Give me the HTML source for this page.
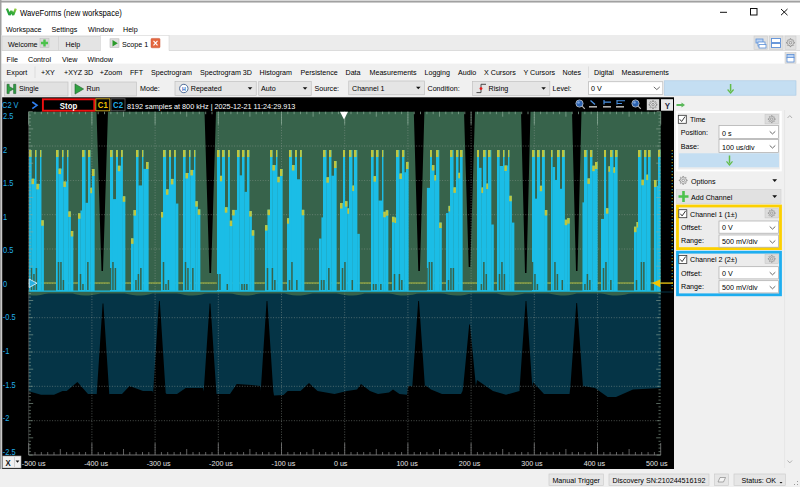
<!DOCTYPE html>
<html><head><meta charset="utf-8"><style>
html,body{margin:0;padding:0;background:#f0f0f0;overflow:hidden}
svg{display:block}
text{font-family:"Liberation Sans", sans-serif}
</style></head><body>
<svg width="800" height="487" viewBox="0 0 800 487">
<rect x="0" y="0" width="800" height="487" fill="#f0f0f0" />
<rect x="0" y="0" width="800" height="35" fill="#ffffff" />
<rect x="0" y="1.2" width="800" height="1.2" fill="#7a7a7a" />
<rect x="0" y="0" width="800" height="1.2" fill="#d8d8d8" />
<rect x="0" y="0" width="1.5" height="487" fill="#a0a0a0" />
<defs><linearGradient id="wg" x1="0" y1="1" x2="1" y2="0"><stop offset="0" stop-color="#129a3c"/><stop offset="0.55" stop-color="#3fae3a"/><stop offset="1" stop-color="#9ccf3c"/></linearGradient></defs>
<path d="M6.9 8.6 L9.5 14.9 L11.3 11 L13.2 14.9 L15.8 8.6" fill="none" stroke="url(#wg)" stroke-width="2.3" stroke-linejoin="bevel"/>
<text transform="translate(20.00,15.70) scale(0.915,1)" font-size="8.46" fill="#000" font-weight="normal" text-anchor="start" >WaveForms (new workspace)</text>
<path d="M720 12.3 H727" stroke="#111" stroke-width="1"/>
<rect x="750.5" y="8.5" width="6.5" height="6.5" fill="none" stroke="#111" stroke-width="1"/>
<path d="M781 9 L787.5 15.2 M787.5 9 L781 15.2" stroke="#111" stroke-width="1"/>
<text transform="translate(6.00,31.80) scale(0.915,1)" font-size="7.81" fill="#000" font-weight="normal" text-anchor="start" >Workspace</text>
<text transform="translate(51.60,31.80) scale(0.915,1)" font-size="7.81" fill="#000" font-weight="normal" text-anchor="start" >Settings</text>
<text transform="translate(88.00,31.80) scale(0.915,1)" font-size="7.81" fill="#000" font-weight="normal" text-anchor="start" >Window</text>
<text transform="translate(123.00,31.80) scale(0.915,1)" font-size="7.81" fill="#000" font-weight="normal" text-anchor="start" >Help</text>
<rect x="1.5" y="35" width="800" height="16" fill="#ececec" />
<rect x="1.5" y="50.3" width="800" height="0.8" fill="#d6d6d6" />
<rect x="2" y="36.5" width="56.5" height="14" fill="#e4e4e4" stroke="#d0d0d0" stroke-width="0.6" />
<text transform="translate(8.00,47.00) scale(0.915,1)" font-size="7.81" fill="#000" font-weight="normal" text-anchor="start" >Welcome</text>
<rect x="40" y="38.5" width="9" height="9" fill="#d8d8d8" stroke="#b8b8b8" stroke-width="0.5" />
<path d="M44.5 39.5 V46.5 M41 43 H48" stroke="#4cc24c" stroke-width="2.4"/>
<rect x="58.5" y="36.5" width="42" height="14" fill="#e4e4e4" stroke="#d0d0d0" stroke-width="0.6" />
<text transform="translate(65.60,47.00) scale(0.915,1)" font-size="7.81" fill="#000" font-weight="normal" text-anchor="start" >Help</text>
<rect x="100.5" y="35.3" width="68.5" height="16" fill="#ffffff" stroke="#d8d8d8" stroke-width="0.6" />
<rect x="101" y="50" width="67.5" height="2" fill="#ffffff" />
<rect x="110" y="38.8" width="9" height="8.7" fill="#dedede" stroke="#b0b0b0" stroke-width="0.5" />
<path d="M112.5 40 L117.8 43.2 L112.5 46.4 Z" fill="#2a9a2a"/>
<text transform="translate(122.00,47.00) scale(0.915,1)" font-size="7.81" fill="#000" font-weight="normal" text-anchor="start" >Scope 1</text>
<rect x="151" y="38.4" width="9" height="9.4" fill="#e4673f" stroke="#c85030" stroke-width="0.5" rx="1"/>
<path d="M153.5 40.8 L157.5 45.4 M157.5 40.8 L153.5 45.4" stroke="#fff" stroke-width="1.1"/>
<rect x="754" y="36" width="13.5" height="13.5" fill="#e0e0e0" stroke="#c8c8c8" stroke-width="0.5" />
<rect x="769.5" y="36" width="13.5" height="13.5" fill="#e0e0e0" stroke="#c8c8c8" stroke-width="0.5" />
<rect x="756" y="39" width="7" height="4" fill="#bcd4f4" stroke="#5b8fd8" stroke-width="0.8"/><rect x="758" y="42" width="7" height="4" fill="#fff" stroke="#5b8fd8" stroke-width="0.8"/><rect x="759" y="44.5" width="7" height="3.5" fill="#fff" stroke="#5b8fd8" stroke-width="0.8"/>
<rect x="771.5" y="38.5" width="9" height="4" fill="#fff" stroke="#5b8fd8" stroke-width="0.9"/><rect x="771.5" y="43.5" width="9" height="4" fill="#fff" stroke="#5b8fd8" stroke-width="0.9"/>
<rect x="785" y="36" width="11" height="13.5" fill="#e0e0e0" stroke="#c8c8c8" stroke-width="0.5" />
<path d="M793.45 42.17 L794.47 42.23 L794.47 43.17 L793.45 43.23 L792.96 44.42 L793.64 45.18 L792.98 45.84 L792.22 45.16 L791.03 45.65 L790.97 46.67 L790.03 46.67 L789.97 45.65 L788.78 45.16 L788.02 45.84 L787.36 45.18 L788.04 44.42 L787.55 43.23 L786.53 43.17 L786.53 42.23 L787.55 42.17 L788.04 40.98 L787.36 40.22 L788.02 39.56 L788.78 40.24 L789.97 39.75 L790.03 38.73 L790.97 38.73 L791.03 39.75 L792.22 40.24 L792.98 39.56 L793.64 40.22 L792.96 40.98 Z M791.80 42.70 A1.3 1.3 0 1 0 789.20 42.70 A1.3 1.3 0 1 0 791.80 42.70 Z" fill="#e4e4e4" stroke="#707070" stroke-width="0.6" fill-rule="evenodd"/>
<rect x="1.5" y="51" width="800" height="12.8" fill="#ffffff" />
<text transform="translate(6.60,61.50) scale(0.915,1)" font-size="7.81" fill="#000" font-weight="normal" text-anchor="start" >File</text>
<text transform="translate(28.00,61.50) scale(0.915,1)" font-size="7.81" fill="#000" font-weight="normal" text-anchor="start" >Control</text>
<text transform="translate(62.00,61.50) scale(0.915,1)" font-size="7.81" fill="#000" font-weight="normal" text-anchor="start" >View</text>
<text transform="translate(87.50,61.50) scale(0.915,1)" font-size="7.81" fill="#000" font-weight="normal" text-anchor="start" >Window</text>
<rect x="785" y="52.5" width="11" height="11" fill="#e0e0e0" stroke="#c8c8c8" stroke-width="0.5" />
<rect x="787" y="54.5" width="7" height="3.5" fill="#bcd4f4" stroke="#5b8fd8" stroke-width="0.8"/><rect x="787" y="57.5" width="7" height="4.5" fill="#fff" stroke="#5b8fd8" stroke-width="0.8"/>
<rect x="1.5" y="63.8" width="800" height="16.8" fill="#f0f0f0" />
<text transform="translate(6.60,75.10) scale(0.915,1)" font-size="7.81" fill="#000" font-weight="normal" text-anchor="start" >Export</text>
<text transform="translate(41.00,75.10) scale(0.915,1)" font-size="7.81" fill="#000" font-weight="normal" text-anchor="start" >+XY</text>
<text transform="translate(64.00,75.10) scale(0.915,1)" font-size="7.81" fill="#000" font-weight="normal" text-anchor="start" >+XYZ 3D</text>
<text transform="translate(99.75,75.10) scale(0.915,1)" font-size="7.81" fill="#000" font-weight="normal" text-anchor="start" >+Zoom</text>
<text transform="translate(130.00,75.10) scale(0.915,1)" font-size="7.81" fill="#000" font-weight="normal" text-anchor="start" >FFT</text>
<text transform="translate(151.00,75.10) scale(0.915,1)" font-size="7.81" fill="#000" font-weight="normal" text-anchor="start" >Spectrogram</text>
<text transform="translate(200.00,75.10) scale(0.915,1)" font-size="7.81" fill="#000" font-weight="normal" text-anchor="start" >Spectrogram 3D</text>
<text transform="translate(259.50,75.10) scale(0.915,1)" font-size="7.81" fill="#000" font-weight="normal" text-anchor="start" >Histogram</text>
<text transform="translate(300.50,75.10) scale(0.915,1)" font-size="7.81" fill="#000" font-weight="normal" text-anchor="start" >Persistence</text>
<text transform="translate(345.50,75.10) scale(0.915,1)" font-size="7.81" fill="#000" font-weight="normal" text-anchor="start" >Data</text>
<text transform="translate(369.50,75.10) scale(0.915,1)" font-size="7.81" fill="#000" font-weight="normal" text-anchor="start" >Measurements</text>
<text transform="translate(424.50,75.10) scale(0.915,1)" font-size="7.81" fill="#000" font-weight="normal" text-anchor="start" >Logging</text>
<text transform="translate(458.00,75.10) scale(0.915,1)" font-size="7.81" fill="#000" font-weight="normal" text-anchor="start" >Audio</text>
<text transform="translate(484.00,75.10) scale(0.915,1)" font-size="7.81" fill="#000" font-weight="normal" text-anchor="start" >X Cursors</text>
<text transform="translate(523.50,75.10) scale(0.915,1)" font-size="7.81" fill="#000" font-weight="normal" text-anchor="start" >Y Cursors</text>
<text transform="translate(562.50,75.10) scale(0.915,1)" font-size="7.81" fill="#000" font-weight="normal" text-anchor="start" >Notes</text>
<text transform="translate(594.00,75.10) scale(0.915,1)" font-size="7.81" fill="#000" font-weight="normal" text-anchor="start" >Digital</text>
<text transform="translate(621.60,75.10) scale(0.915,1)" font-size="7.81" fill="#000" font-weight="normal" text-anchor="start" >Measurements</text>
<path d="M35 66.5 V78 M588.5 66.5 V78" stroke="#d4d4d4" stroke-width="0.7"/>
<rect x="4.4" y="82" width="63.6" height="14" fill="#e1e1e1" stroke="#c4c4c4" stroke-width="0.7" />
<rect x="71.75" y="82" width="64.75" height="14" fill="#e1e1e1" stroke="#c4c4c4" stroke-width="0.7" />
<path d="M7 84.3 H9.2 V86.5 L13.6 89 L9.2 91.5 V93.6 H7 Z M13.6 84.3 H15.8 V93.6 H13.6 Z" fill="#2f9f42" stroke="#1c5a2a" stroke-width="0.55"/>
<text transform="translate(19.00,91.30) scale(0.915,1)" font-size="7.81" fill="#000" font-weight="normal" text-anchor="start" >Single</text>
<path d="M75 83.9 L83.6 89 L75 94.1 Z" fill="#30a242" stroke="#1c5e2a" stroke-width="0.6"/>
<text transform="translate(86.60,91.30) scale(0.915,1)" font-size="7.81" fill="#000" font-weight="normal" text-anchor="start" >Run</text>
<text transform="translate(140.00,91.10) scale(0.915,1)" font-size="7.81" fill="#000" font-weight="normal" text-anchor="start" >Mode:</text>
<rect x="175" y="81.5" width="81.25" height="14" fill="#e5e5e5" stroke="#c0c0c0" stroke-width="0.7" />
<path d="M247.75 87.3 L252.35000000000002 87.3 L250.05 89.7 Z" fill="#111"/>
<circle cx="183.8" cy="88.5" r="4.2" fill="#fff" stroke="#3a5a8a" stroke-width="0.9"/>
<text transform="translate(183.80,90.80) scale(0.915,1)" font-size="5.64" fill="#2060c0" font-weight="bold" text-anchor="middle" >H</text>
<text transform="translate(190.75,91.20) scale(0.915,1)" font-size="7.81" fill="#000" font-weight="normal" text-anchor="start" >Repeated</text>
<rect x="258.75" y="81.5" width="52.5" height="14" fill="#e5e5e5" stroke="#c0c0c0" stroke-width="0.7" />
<path d="M302.75 87.3 L307.35 87.3 L305.05 89.7 Z" fill="#111"/>
<text transform="translate(261.00,91.20) scale(0.915,1)" font-size="7.81" fill="#000" font-weight="normal" text-anchor="start" >Auto</text>
<text transform="translate(314.50,91.10) scale(0.915,1)" font-size="7.81" fill="#000" font-weight="normal" text-anchor="start" >Source:</text>
<rect x="348.75" y="81" width="75.75" height="13.75" fill="#e5e5e5" stroke="#c0c0c0" stroke-width="0.7" />
<path d="M416.0 86.8 L420.6 86.8 L418.3 89.2 Z" fill="#111"/>
<text transform="translate(352.00,91.20) scale(0.915,1)" font-size="7.81" fill="#000" font-weight="normal" text-anchor="start" >Channel 1</text>
<text transform="translate(427.50,91.10) scale(0.915,1)" font-size="7.81" fill="#000" font-weight="normal" text-anchor="start" >Condition:</text>
<rect x="472.5" y="81.5" width="77.3" height="14" fill="#e5e5e5" stroke="#c0c0c0" stroke-width="0.7" />
<path d="M541.3 87.3 L545.8999999999999 87.3 L543.5999999999999 89.7 Z" fill="#111"/>
<path d="M476.5 92.6 H481 V84.3 H486" fill="none" stroke="#3a3a3a" stroke-width="0.9"/><circle cx="481" cy="88.6" r="1.4" fill="#e81818"/>
<text transform="translate(488.50,91.20) scale(0.915,1)" font-size="7.81" fill="#000" font-weight="normal" text-anchor="start" >Rising</text>
<text transform="translate(552.50,91.10) scale(0.915,1)" font-size="7.81" fill="#000" font-weight="normal" text-anchor="start" >Level:</text>
<rect x="588.5" y="81.75" width="74.3" height="12.85" fill="#ffffff" stroke="#b4b4b4" stroke-width="0.7" />
<text transform="translate(591.00,91.30) scale(0.915,1)" font-size="7.81" fill="#000" font-weight="normal" text-anchor="start" >0 V</text>
<path d="M653.8 86.9 L656.8 89.6 L659.8 86.9" fill="none" stroke="#444" stroke-width="0.8"/>
<rect x="664.5" y="80.8" width="131.5" height="14.4" fill="#c4def2" stroke="#a8c8e4" stroke-width="0.6" />
<path d="M730.6 84 V91.5" stroke="#62bc4a" stroke-width="1.5"/><path d="M727.6 89.5 L730.6 93 L733.6 89.5" fill="none" stroke="#62bc4a" stroke-width="1.2"/>
<rect x="2.20" y="97.30" width="671.80" height="371.70" fill="#000000" />
<polygon fill="#37634b" points="28.7,111.7 96.5,111.7 101.5,271.0 103.0,271.0 108.0,111.7 204.5,111.7 209.4,273.0 211.1,273.0 216.0,111.7 413.8,111.7 418.3,271.0 419.9,271.0 424.4,111.7 464.0,111.7 468.7,267.0 470.3,267.0 475.0,111.7 521.0,111.7 525.0,273.0 526.5,273.0 530.5,111.7 572.0,111.7 576.0,271.0 577.5,271.0 581.5,111.7 660.7,111.7 660.7,294.7 656.7,293.8 652.7,293.6 648.7,293.6 644.7,293.6 640.7,293.6 636.7,293.6 632.7,293.6 628.7,293.8 624.7,294.7 620.7,295.3 616.7,295.6 612.7,295.4 608.7,294.9 604.7,294.0 600.7,293.6 596.7,293.6 592.7,293.6 588.7,293.6 584.7,293.6 580.7,293.6 576.7,293.6 572.7,294.5 568.7,295.2 564.7,295.6 560.7,295.5 556.7,295.0 552.7,294.2 548.7,293.6 544.7,293.6 540.7,293.6 536.7,293.6 532.7,293.6 528.7,293.6 524.7,293.6 520.7,294.3 516.7,295.0 512.7,295.5 508.7,295.6 504.7,295.2 500.7,294.4 496.7,293.6 492.7,293.6 488.7,293.6 484.7,293.6 480.7,293.6 476.7,293.6 472.7,293.6 468.7,294.0 464.7,294.9 460.7,295.4 456.7,295.6 452.7,295.3 448.7,294.7 444.7,293.8 440.7,293.6 436.7,293.6 432.7,293.6 428.7,293.6 424.7,293.6 420.7,293.6 416.7,293.8 412.7,294.7 408.7,295.3 404.7,295.6 400.7,295.4 396.7,294.9 392.7,294.0 388.7,293.6 384.7,293.6 380.7,293.6 376.7,293.6 372.7,293.6 368.7,293.6 364.7,293.6 360.7,294.5 356.7,295.2 352.7,295.6 348.7,295.5 344.7,295.0 340.7,294.2 336.7,293.6 332.7,293.6 328.7,293.6 324.7,293.6 320.7,293.6 316.7,293.6 312.7,293.6 308.7,294.3 304.7,295.0 300.7,295.5 296.7,295.6 292.7,295.2 288.7,294.4 284.7,293.6 280.7,293.6 276.7,293.6 272.7,293.6 268.7,293.6 264.7,293.6 260.7,293.6 256.7,294.0 252.7,294.9 248.7,295.4 244.7,295.6 240.7,295.3 236.7,294.7 232.7,293.8 228.7,293.6 224.7,293.6 220.7,293.6 216.7,293.6 212.7,293.6 208.7,293.6 204.7,293.8 200.7,294.7 196.7,295.3 192.7,295.6 188.7,295.4 184.7,294.9 180.7,294.0 176.7,293.6 172.7,293.6 168.7,293.6 164.7,293.6 160.7,293.6 156.7,293.6 152.7,293.6 148.7,294.5 144.7,295.2 140.7,295.6 136.7,295.5 132.7,295.0 128.7,294.2 124.7,293.6 120.7,293.6 116.7,293.6 112.7,293.6 108.7,293.6 104.7,293.6 100.7,293.6 96.7,294.3 92.7,295.0 88.7,295.5 84.7,295.6 80.7,295.2 76.7,294.4 72.7,293.6 68.7,293.6 64.7,293.6 60.7,293.6 56.7,293.6 52.7,293.6 48.7,293.6 44.7,294.0 40.7,294.9 36.7,295.4 32.7,295.6 28.7,295.3 28.7,295.3"/>
<polygon fill="#053446" points="28.7,292.0 660.7,292.0 660.7,388.0 633.0,389.6 616.0,397.0 607.7,397.0 595.0,388.0 583.5,386.0 583.0,386.5 577.1,303.0 576.3,303.0 570.4,386.5 570.5,386.0 569.5,394.0 544.0,394.0 533.0,382.0 532.3,387.0 526.4,301.0 525.6,301.0 519.7,387.0 519.5,391.0 506.0,394.7 493.0,391.0 477.0,380.0 475.9,386.0 470.0,324.6 469.2,324.6 463.3,386.0 462.5,391.0 461.0,394.0 442.0,394.0 431.0,389.6 426.0,385.4 424.9,386.2 419.0,301.0 418.2,301.0 412.3,386.2 411.5,386.0 408.0,386.0 407.0,394.7 399.5,394.0 393.0,389.6 389.0,392.6 378.0,394.0 370.0,391.0 361.0,384.0 357.0,389.6 347.0,391.0 334.5,394.0 317.5,391.0 309.0,383.0 300.5,391.0 287.7,391.0 283.5,395.0 274.0,395.6 273.3,391.3 267.4,301.0 266.6,301.0 260.7,391.3 260.5,386.0 251.6,385.0 236.7,384.0 230.0,394.0 216.5,394.0 216.3,391.5 210.4,303.4 209.6,303.4 203.7,391.5 203.0,388.0 185.7,388.0 177.0,394.0 166.6,394.0 165.7,393.0 159.8,301.0 159.0,301.0 153.1,393.0 152.5,391.0 143.0,391.0 129.6,386.0 122.0,394.0 109.0,394.0 109.3,394.5 103.4,303.4 102.6,303.4 96.7,394.5 96.5,394.0 88.0,394.0 77.4,382.0 66.7,391.0 62.5,391.0 54.0,394.7 41.0,394.7 28.7,391.3"/>
<polygon fill="#37634b" points="28.7,290.0 28.7,295.3 28.7,295.3 32.7,295.6 36.7,295.4 40.7,294.9 44.7,294.0 48.7,293.6 52.7,293.6 56.7,293.6 60.7,293.6 64.7,293.6 68.7,293.6 72.7,293.6 76.7,294.4 80.7,295.2 84.7,295.6 88.7,295.5 92.7,295.0 96.7,294.3 100.7,293.6 104.7,293.6 108.7,293.6 112.7,293.6 116.7,293.6 120.7,293.6 124.7,293.6 128.7,294.2 132.7,295.0 136.7,295.5 140.7,295.6 144.7,295.2 148.7,294.5 152.7,293.6 156.7,293.6 160.7,293.6 164.7,293.6 168.7,293.6 172.7,293.6 176.7,293.6 180.7,294.0 184.7,294.9 188.7,295.4 192.7,295.6 196.7,295.3 200.7,294.7 204.7,293.8 208.7,293.6 212.7,293.6 216.7,293.6 220.7,293.6 224.7,293.6 228.7,293.6 232.7,293.8 236.7,294.7 240.7,295.3 244.7,295.6 248.7,295.4 252.7,294.9 256.7,294.0 260.7,293.6 264.7,293.6 268.7,293.6 272.7,293.6 276.7,293.6 280.7,293.6 284.7,293.6 288.7,294.4 292.7,295.2 296.7,295.6 300.7,295.5 304.7,295.0 308.7,294.3 312.7,293.6 316.7,293.6 320.7,293.6 324.7,293.6 328.7,293.6 332.7,293.6 336.7,293.6 340.7,294.2 344.7,295.0 348.7,295.5 352.7,295.6 356.7,295.2 360.7,294.5 364.7,293.6 368.7,293.6 372.7,293.6 376.7,293.6 380.7,293.6 384.7,293.6 388.7,293.6 392.7,294.0 396.7,294.9 400.7,295.4 404.7,295.6 408.7,295.3 412.7,294.7 416.7,293.8 420.7,293.6 424.7,293.6 428.7,293.6 432.7,293.6 436.7,293.6 440.7,293.6 444.7,293.8 448.7,294.7 452.7,295.3 456.7,295.6 460.7,295.4 464.7,294.9 468.7,294.0 472.7,293.6 476.7,293.6 480.7,293.6 484.7,293.6 488.7,293.6 492.7,293.6 496.7,293.6 500.7,294.4 504.7,295.2 508.7,295.6 512.7,295.5 516.7,295.0 520.7,294.3 524.7,293.6 528.7,293.6 532.7,293.6 536.7,293.6 540.7,293.6 544.7,293.6 548.7,293.6 552.7,294.2 556.7,295.0 560.7,295.5 564.7,295.6 568.7,295.2 572.7,294.5 576.7,293.6 580.7,293.6 584.7,293.6 588.7,293.6 592.7,293.6 596.7,293.6 600.7,293.6 604.7,294.0 608.7,294.9 612.7,295.4 616.7,295.6 620.7,295.3 624.7,294.7 628.7,293.8 632.7,293.6 636.7,293.6 640.7,293.6 644.7,293.6 648.7,293.6 652.7,293.6 656.7,293.8 660.7,294.7 660.7,290.0"/>
<line x1="91.9" y1="111.7" x2="91.9" y2="455.0" stroke="#9aa49c" stroke-width="0.7" stroke-dasharray="1 1.6" opacity="0.7"/>
<line x1="155.1" y1="111.7" x2="155.1" y2="455.0" stroke="#9aa49c" stroke-width="0.7" stroke-dasharray="1 1.6" opacity="0.7"/>
<line x1="218.3" y1="111.7" x2="218.3" y2="455.0" stroke="#9aa49c" stroke-width="0.7" stroke-dasharray="1 1.6" opacity="0.7"/>
<line x1="281.5" y1="111.7" x2="281.5" y2="455.0" stroke="#9aa49c" stroke-width="0.7" stroke-dasharray="1 1.6" opacity="0.7"/>
<line x1="344.7" y1="111.7" x2="344.7" y2="455.0" stroke="#9aa49c" stroke-width="0.7" stroke-dasharray="1 1.6" opacity="0.7"/>
<line x1="407.9" y1="111.7" x2="407.9" y2="455.0" stroke="#9aa49c" stroke-width="0.7" stroke-dasharray="1 1.6" opacity="0.7"/>
<line x1="471.1" y1="111.7" x2="471.1" y2="455.0" stroke="#9aa49c" stroke-width="0.7" stroke-dasharray="1 1.6" opacity="0.7"/>
<line x1="534.3" y1="111.7" x2="534.3" y2="455.0" stroke="#9aa49c" stroke-width="0.7" stroke-dasharray="1 1.6" opacity="0.7"/>
<line x1="597.5" y1="111.7" x2="597.5" y2="455.0" stroke="#9aa49c" stroke-width="0.7" stroke-dasharray="1 1.6" opacity="0.7"/>
<line x1="28.7" y1="146.0" x2="660.7" y2="146.0" stroke="#9aa49c" stroke-width="0.7" stroke-dasharray="1 1.6" opacity="0.7"/>
<line x1="28.7" y1="180.4" x2="660.7" y2="180.4" stroke="#9aa49c" stroke-width="0.7" stroke-dasharray="1 1.6" opacity="0.7"/>
<line x1="28.7" y1="214.7" x2="660.7" y2="214.7" stroke="#9aa49c" stroke-width="0.7" stroke-dasharray="1 1.6" opacity="0.7"/>
<line x1="28.7" y1="249.0" x2="660.7" y2="249.0" stroke="#9aa49c" stroke-width="0.7" stroke-dasharray="1 1.6" opacity="0.7"/>
<line x1="28.7" y1="283.3" x2="660.7" y2="283.3" stroke="#9aa49c" stroke-width="0.7" stroke-dasharray="1 1.6" opacity="0.7"/>
<line x1="28.7" y1="317.7" x2="660.7" y2="317.7" stroke="#9aa49c" stroke-width="0.7" stroke-dasharray="1 1.6" opacity="0.7"/>
<line x1="28.7" y1="352.0" x2="660.7" y2="352.0" stroke="#9aa49c" stroke-width="0.7" stroke-dasharray="1 1.6" opacity="0.7"/>
<line x1="28.7" y1="386.3" x2="660.7" y2="386.3" stroke="#9aa49c" stroke-width="0.7" stroke-dasharray="1 1.6" opacity="0.7"/>
<line x1="28.7" y1="420.7" x2="660.7" y2="420.7" stroke="#9aa49c" stroke-width="0.7" stroke-dasharray="1 1.6" opacity="0.7"/>
<line x1="28.7" y1="283" x2="673" y2="283" stroke="#bfc63e" stroke-width="0.9"/>
<clipPath id="pc"><rect x="28.7" y="111.7" width="632" height="343.3"/></clipPath>
<g clip-path="url(#pc)">
<rect x="29.00" y="150.00" width="2.65" height="141.00" fill="#1bbde6" />
<rect x="31.45" y="178.69" width="3.75" height="112.31" fill="#1bbde6" />
<rect x="35.00" y="150.00" width="1.55" height="141.00" fill="#1bbde6" />
<rect x="36.35" y="183.85" width="3.85" height="107.15" fill="#1bbde6" />
<rect x="40.00" y="150.00" width="1.45" height="141.00" fill="#1bbde6" />
<rect x="41.25" y="220.23" width="2.65" height="70.77" fill="#1bbde6" />
<rect x="56.00" y="150.00" width="2.65" height="141.00" fill="#1bbde6" />
<rect x="58.45" y="168.57" width="3.75" height="122.43" fill="#1bbde6" />
<rect x="62.00" y="150.00" width="1.55" height="141.00" fill="#1bbde6" />
<rect x="63.35" y="181.48" width="3.85" height="109.52" fill="#1bbde6" />
<rect x="67.00" y="150.00" width="1.45" height="141.00" fill="#1bbde6" />
<rect x="68.25" y="211.40" width="2.65" height="79.60" fill="#1bbde6" />
<rect x="70.70" y="230.99" width="2.65" height="60.01" fill="#1bbde6" />
<rect x="78.00" y="213.25" width="2.65" height="77.75" fill="#1bbde6" />
<rect x="80.45" y="210.46" width="1.75" height="80.54" fill="#1bbde6" />
<rect x="82.00" y="150.00" width="3.55" height="141.00" fill="#1bbde6" />
<rect x="85.35" y="202.81" width="2.85" height="88.19" fill="#1bbde6" />
<rect x="88.00" y="150.00" width="2.45" height="141.00" fill="#1bbde6" />
<rect x="90.25" y="187.74" width="1.95" height="103.26" fill="#1bbde6" />
<rect x="92.00" y="169.00" width="2.65" height="122.00" fill="#1bbde6" />
<rect x="110.00" y="150.00" width="3.10" height="141.00" fill="#1bbde6" />
<rect x="112.90" y="199.13" width="3.30" height="91.87" fill="#1bbde6" />
<rect x="116.00" y="150.00" width="2.00" height="141.00" fill="#1bbde6" />
<rect x="117.80" y="165.71" width="3.40" height="125.29" fill="#1bbde6" />
<rect x="121.00" y="150.00" width="1.90" height="141.00" fill="#1bbde6" />
<rect x="122.70" y="196.27" width="2.65" height="94.73" fill="#1bbde6" />
<rect x="131.00" y="238.34" width="2.65" height="52.66" fill="#1bbde6" />
<rect x="133.45" y="210.09" width="2.75" height="80.91" fill="#1bbde6" />
<rect x="136.00" y="150.00" width="2.55" height="141.00" fill="#1bbde6" />
<rect x="138.35" y="185.44" width="3.85" height="105.56" fill="#1bbde6" />
<rect x="142.00" y="150.00" width="1.45" height="141.00" fill="#1bbde6" />
<rect x="143.25" y="168.88" width="2.95" height="122.12" fill="#1bbde6" />
<rect x="146.00" y="162.00" width="2.65" height="129.00" fill="#1bbde6" />
<rect x="161.00" y="211.99" width="2.20" height="79.01" fill="#1bbde6" />
<rect x="163.00" y="150.00" width="3.10" height="141.00" fill="#1bbde6" />
<rect x="165.90" y="189.26" width="3.30" height="101.74" fill="#1bbde6" />
<rect x="169.00" y="150.00" width="2.00" height="141.00" fill="#1bbde6" />
<rect x="170.80" y="178.92" width="3.40" height="112.08" fill="#1bbde6" />
<rect x="174.00" y="150.00" width="1.90" height="141.00" fill="#1bbde6" />
<rect x="175.70" y="203.54" width="2.65" height="87.46" fill="#1bbde6" />
<rect x="183.00" y="150.00" width="2.65" height="141.00" fill="#1bbde6" />
<rect x="185.45" y="172.97" width="3.75" height="118.03" fill="#1bbde6" />
<rect x="189.00" y="150.00" width="1.55" height="141.00" fill="#1bbde6" />
<rect x="190.35" y="169.95" width="3.85" height="121.05" fill="#1bbde6" />
<rect x="194.00" y="150.00" width="1.45" height="141.00" fill="#1bbde6" />
<rect x="195.25" y="201.17" width="2.65" height="89.83" fill="#1bbde6" />
<rect x="197.70" y="209.31" width="2.65" height="81.69" fill="#1bbde6" />
<rect x="217.00" y="150.00" width="3.10" height="141.00" fill="#1bbde6" />
<rect x="219.90" y="175.81" width="2.30" height="115.19" fill="#1bbde6" />
<rect x="222.00" y="150.00" width="3.00" height="141.00" fill="#1bbde6" />
<rect x="224.80" y="207.20" width="3.40" height="83.80" fill="#1bbde6" />
<rect x="228.00" y="150.00" width="1.90" height="141.00" fill="#1bbde6" />
<rect x="229.70" y="220.62" width="2.65" height="70.38" fill="#1bbde6" />
<rect x="232.15" y="209.92" width="5.05" height="81.08" fill="#1bbde6" />
<rect x="237.00" y="150.00" width="2.65" height="141.00" fill="#1bbde6" />
<rect x="239.45" y="175.35" width="2.75" height="115.65" fill="#1bbde6" />
<rect x="242.00" y="150.00" width="2.55" height="141.00" fill="#1bbde6" />
<rect x="244.35" y="191.86" width="2.85" height="99.14" fill="#1bbde6" />
<rect x="247.00" y="150.00" width="2.45" height="141.00" fill="#1bbde6" />
<rect x="249.25" y="211.09" width="2.65" height="79.91" fill="#1bbde6" />
<rect x="251.70" y="230.19" width="2.65" height="60.81" fill="#1bbde6" />
<rect x="265.00" y="225.11" width="2.65" height="65.89" fill="#1bbde6" />
<rect x="267.45" y="209.64" width="2.75" height="81.36" fill="#1bbde6" />
<rect x="270.00" y="150.00" width="2.55" height="141.00" fill="#1bbde6" />
<rect x="272.35" y="165.08" width="3.85" height="125.92" fill="#1bbde6" />
<rect x="276.00" y="150.00" width="1.45" height="141.00" fill="#1bbde6" />
<rect x="277.25" y="176.82" width="2.95" height="114.18" fill="#1bbde6" />
<rect x="280.00" y="169.00" width="2.65" height="122.00" fill="#1bbde6" />
<rect x="287.00" y="218.21" width="2.20" height="72.79" fill="#1bbde6" />
<rect x="289.00" y="150.00" width="3.10" height="141.00" fill="#1bbde6" />
<rect x="291.90" y="165.05" width="3.30" height="125.95" fill="#1bbde6" />
<rect x="295.00" y="150.00" width="2.00" height="141.00" fill="#1bbde6" />
<rect x="296.80" y="179.27" width="3.40" height="111.73" fill="#1bbde6" />
<rect x="300.00" y="150.00" width="1.90" height="141.00" fill="#1bbde6" />
<rect x="301.70" y="209.80" width="2.65" height="81.20" fill="#1bbde6" />
<rect x="319.00" y="238.56" width="2.65" height="52.44" fill="#1bbde6" />
<rect x="321.45" y="217.39" width="1.75" height="73.61" fill="#1bbde6" />
<rect x="323.00" y="150.00" width="3.55" height="141.00" fill="#1bbde6" />
<rect x="326.35" y="177.21" width="2.85" height="113.79" fill="#1bbde6" />
<rect x="329.00" y="150.00" width="2.45" height="141.00" fill="#1bbde6" />
<rect x="331.25" y="175.70" width="2.95" height="115.30" fill="#1bbde6" />
<rect x="334.00" y="161.00" width="2.65" height="130.00" fill="#1bbde6" />
<rect x="340.00" y="203.01" width="3.20" height="87.99" fill="#1bbde6" />
<rect x="343.00" y="150.00" width="2.10" height="141.00" fill="#1bbde6" />
<rect x="344.90" y="201.16" width="2.65" height="89.84" fill="#1bbde6" />
<rect x="347.35" y="208.31" width="1.85" height="82.69" fill="#1bbde6" />
<rect x="349.00" y="150.00" width="3.45" height="141.00" fill="#1bbde6" />
<rect x="352.25" y="185.54" width="1.95" height="105.46" fill="#1bbde6" />
<rect x="354.00" y="150.00" width="3.35" height="141.00" fill="#1bbde6" />
<rect x="357.15" y="233.84" width="2.65" height="57.16" fill="#1bbde6" />
<rect x="371.00" y="150.00" width="2.65" height="141.00" fill="#1bbde6" />
<rect x="373.45" y="176.14" width="2.75" height="114.86" fill="#1bbde6" />
<rect x="376.00" y="150.00" width="2.55" height="141.00" fill="#1bbde6" />
<rect x="378.35" y="200.54" width="3.85" height="90.46" fill="#1bbde6" />
<rect x="382.00" y="150.00" width="1.45" height="141.00" fill="#1bbde6" />
<rect x="383.25" y="211.76" width="2.65" height="79.24" fill="#1bbde6" />
<rect x="385.70" y="210.21" width="2.65" height="80.79" fill="#1bbde6" />
<rect x="392.00" y="216.75" width="2.65" height="74.25" fill="#1bbde6" />
<rect x="394.45" y="217.48" width="1.75" height="73.52" fill="#1bbde6" />
<rect x="396.00" y="150.00" width="3.55" height="141.00" fill="#1bbde6" />
<rect x="399.35" y="173.49" width="2.85" height="117.51" fill="#1bbde6" />
<rect x="402.00" y="150.00" width="2.45" height="141.00" fill="#1bbde6" />
<rect x="404.25" y="172.26" width="1.95" height="118.74" fill="#1bbde6" />
<rect x="406.00" y="162.00" width="2.65" height="129.00" fill="#1bbde6" />
<rect x="426.90" y="187.86" width="3.30" height="103.14" fill="#1bbde6" />
<rect x="430.00" y="150.00" width="2.00" height="141.00" fill="#1bbde6" />
<rect x="431.80" y="165.09" width="2.65" height="125.91" fill="#1bbde6" />
<rect x="434.25" y="175.07" width="1.95" height="115.93" fill="#1bbde6" />
<rect x="436.00" y="150.00" width="3.35" height="141.00" fill="#1bbde6" />
<rect x="439.15" y="222.56" width="2.65" height="68.44" fill="#1bbde6" />
<rect x="446.00" y="213.07" width="2.65" height="77.93" fill="#1bbde6" />
<rect x="448.45" y="205.88" width="1.75" height="85.12" fill="#1bbde6" />
<rect x="450.00" y="150.00" width="3.55" height="141.00" fill="#1bbde6" />
<rect x="453.35" y="187.35" width="2.85" height="103.65" fill="#1bbde6" />
<rect x="456.00" y="150.00" width="2.45" height="141.00" fill="#1bbde6" />
<rect x="458.25" y="172.80" width="1.95" height="118.20" fill="#1bbde6" />
<rect x="460.00" y="150.00" width="2.65" height="141.00" fill="#1bbde6" />
<rect x="477.00" y="150.00" width="2.10" height="141.00" fill="#1bbde6" />
<rect x="478.90" y="167.84" width="2.65" height="123.16" fill="#1bbde6" />
<rect x="481.35" y="187.45" width="1.85" height="103.55" fill="#1bbde6" />
<rect x="483.00" y="150.00" width="3.45" height="141.00" fill="#1bbde6" />
<rect x="486.25" y="183.55" width="1.95" height="107.45" fill="#1bbde6" />
<rect x="488.00" y="150.00" width="3.35" height="141.00" fill="#1bbde6" />
<rect x="491.15" y="224.51" width="2.65" height="66.49" fill="#1bbde6" />
<rect x="497.00" y="150.00" width="2.65" height="141.00" fill="#1bbde6" />
<rect x="499.45" y="165.99" width="3.75" height="125.01" fill="#1bbde6" />
<rect x="503.00" y="150.00" width="1.55" height="141.00" fill="#1bbde6" />
<rect x="504.35" y="165.46" width="3.85" height="125.54" fill="#1bbde6" />
<rect x="508.00" y="150.00" width="1.45" height="141.00" fill="#1bbde6" />
<rect x="509.25" y="195.77" width="2.65" height="95.23" fill="#1bbde6" />
<rect x="511.70" y="222.57" width="2.65" height="68.43" fill="#1bbde6" />
<rect x="532.00" y="150.00" width="3.10" height="141.00" fill="#1bbde6" />
<rect x="534.90" y="198.64" width="2.30" height="92.36" fill="#1bbde6" />
<rect x="537.00" y="150.00" width="3.00" height="141.00" fill="#1bbde6" />
<rect x="539.80" y="185.73" width="2.40" height="105.27" fill="#1bbde6" />
<rect x="542.00" y="150.00" width="2.90" height="141.00" fill="#1bbde6" />
<rect x="544.70" y="210.00" width="2.65" height="81.00" fill="#1bbde6" />
<rect x="551.00" y="150.00" width="1.65" height="141.00" fill="#1bbde6" />
<rect x="552.45" y="167.02" width="2.65" height="123.98" fill="#1bbde6" />
<rect x="554.90" y="179.93" width="2.30" height="111.07" fill="#1bbde6" />
<rect x="557.00" y="150.00" width="3.00" height="141.00" fill="#1bbde6" />
<rect x="559.80" y="188.77" width="2.40" height="102.23" fill="#1bbde6" />
<rect x="562.00" y="150.00" width="2.90" height="141.00" fill="#1bbde6" />
<rect x="564.70" y="219.68" width="2.65" height="71.32" fill="#1bbde6" />
<rect x="567.15" y="218.12" width="2.65" height="72.88" fill="#1bbde6" />
<rect x="582.45" y="202.38" width="1.75" height="88.62" fill="#1bbde6" />
<rect x="584.00" y="150.00" width="3.55" height="141.00" fill="#1bbde6" />
<rect x="587.35" y="178.39" width="2.85" height="112.61" fill="#1bbde6" />
<rect x="590.00" y="150.00" width="2.45" height="141.00" fill="#1bbde6" />
<rect x="592.25" y="165.67" width="2.95" height="125.33" fill="#1bbde6" />
<rect x="595.00" y="162.00" width="2.65" height="129.00" fill="#1bbde6" />
<rect x="601.00" y="218.93" width="3.20" height="72.07" fill="#1bbde6" />
<rect x="604.00" y="150.00" width="2.10" height="141.00" fill="#1bbde6" />
<rect x="605.90" y="208.19" width="2.65" height="82.81" fill="#1bbde6" />
<rect x="608.35" y="166.26" width="1.85" height="124.74" fill="#1bbde6" />
<rect x="610.00" y="150.00" width="3.45" height="141.00" fill="#1bbde6" />
<rect x="613.25" y="167.32" width="1.95" height="123.68" fill="#1bbde6" />
<rect x="615.00" y="150.00" width="2.65" height="141.00" fill="#1bbde6" />
<rect x="634.00" y="226.70" width="2.65" height="64.30" fill="#1bbde6" />
<rect x="636.45" y="222.01" width="1.75" height="68.99" fill="#1bbde6" />
<rect x="638.00" y="150.00" width="3.55" height="141.00" fill="#1bbde6" />
<rect x="641.35" y="179.72" width="2.85" height="111.28" fill="#1bbde6" />
<rect x="644.00" y="150.00" width="2.45" height="141.00" fill="#1bbde6" />
<rect x="646.25" y="174.62" width="1.95" height="116.38" fill="#1bbde6" />
<rect x="648.00" y="150.00" width="2.65" height="141.00" fill="#1bbde6" />
<rect x="654.00" y="180.00" width="2.65" height="111.00" fill="#1bbde6" />
<rect x="656.45" y="185.83" width="1.75" height="105.17" fill="#1bbde6" />
<rect x="658.00" y="150.00" width="2.65" height="141.00" fill="#1bbde6" />
<rect x="29.00" y="150.00" width="2.55" height="7.00" fill="#bfc63e" />
<rect x="31.45" y="178.69" width="2.55" height="5.50" fill="#bfc63e" />
<rect x="35.00" y="150.00" width="1.45" height="7.00" fill="#bfc63e" />
<rect x="36.35" y="183.85" width="2.55" height="5.50" fill="#bfc63e" />
<rect x="40.00" y="150.00" width="1.35" height="7.00" fill="#bfc63e" />
<rect x="41.25" y="220.23" width="2.55" height="5.50" fill="#bfc63e" />
<rect x="56.00" y="150.00" width="2.55" height="7.00" fill="#bfc63e" />
<rect x="58.45" y="168.57" width="2.55" height="5.50" fill="#bfc63e" />
<rect x="62.00" y="150.00" width="1.45" height="7.00" fill="#bfc63e" />
<rect x="63.35" y="181.48" width="2.55" height="5.50" fill="#bfc63e" />
<rect x="67.00" y="150.00" width="1.35" height="7.00" fill="#bfc63e" />
<rect x="68.25" y="211.40" width="2.55" height="5.50" fill="#bfc63e" />
<rect x="70.70" y="230.99" width="2.55" height="5.50" fill="#bfc63e" />
<rect x="78.00" y="213.25" width="2.55" height="5.50" fill="#bfc63e" />
<rect x="82.00" y="150.00" width="2.55" height="7.00" fill="#bfc63e" />
<rect x="88.00" y="150.00" width="2.35" height="7.00" fill="#bfc63e" />
<rect x="90.25" y="187.74" width="1.85" height="5.50" fill="#bfc63e" />
<rect x="92.00" y="169.00" width="2.55" height="7.00" fill="#bfc63e" />
<rect x="110.00" y="150.00" width="2.55" height="7.00" fill="#bfc63e" />
<rect x="116.00" y="150.00" width="1.90" height="7.00" fill="#bfc63e" />
<rect x="117.80" y="165.71" width="2.55" height="5.50" fill="#bfc63e" />
<rect x="121.00" y="150.00" width="1.80" height="7.00" fill="#bfc63e" />
<rect x="122.70" y="196.27" width="2.55" height="5.50" fill="#bfc63e" />
<rect x="131.00" y="238.34" width="2.55" height="5.50" fill="#bfc63e" />
<rect x="133.45" y="210.09" width="2.55" height="5.50" fill="#bfc63e" />
<rect x="136.00" y="150.00" width="2.45" height="7.00" fill="#bfc63e" />
<rect x="142.00" y="150.00" width="1.35" height="7.00" fill="#bfc63e" />
<rect x="146.00" y="162.00" width="2.55" height="7.00" fill="#bfc63e" />
<rect x="161.00" y="211.99" width="2.10" height="5.50" fill="#bfc63e" />
<rect x="163.00" y="150.00" width="2.55" height="7.00" fill="#bfc63e" />
<rect x="165.90" y="189.26" width="2.55" height="5.50" fill="#bfc63e" />
<rect x="169.00" y="150.00" width="1.90" height="7.00" fill="#bfc63e" />
<rect x="170.80" y="178.92" width="2.55" height="5.50" fill="#bfc63e" />
<rect x="174.00" y="150.00" width="1.80" height="7.00" fill="#bfc63e" />
<rect x="183.00" y="150.00" width="2.55" height="7.00" fill="#bfc63e" />
<rect x="185.45" y="172.97" width="2.55" height="5.50" fill="#bfc63e" />
<rect x="189.00" y="150.00" width="1.45" height="7.00" fill="#bfc63e" />
<rect x="190.35" y="169.95" width="2.55" height="5.50" fill="#bfc63e" />
<rect x="194.00" y="150.00" width="1.35" height="7.00" fill="#bfc63e" />
<rect x="195.25" y="201.17" width="2.55" height="5.50" fill="#bfc63e" />
<rect x="197.70" y="209.31" width="2.55" height="5.50" fill="#bfc63e" />
<rect x="217.00" y="150.00" width="2.55" height="7.00" fill="#bfc63e" />
<rect x="219.90" y="175.81" width="2.20" height="5.50" fill="#bfc63e" />
<rect x="222.00" y="150.00" width="2.55" height="7.00" fill="#bfc63e" />
<rect x="224.80" y="207.20" width="2.55" height="5.50" fill="#bfc63e" />
<rect x="228.00" y="150.00" width="1.80" height="7.00" fill="#bfc63e" />
<rect x="229.70" y="220.62" width="2.55" height="5.50" fill="#bfc63e" />
<rect x="232.15" y="209.92" width="2.55" height="5.50" fill="#bfc63e" />
<rect x="237.00" y="150.00" width="2.55" height="7.00" fill="#bfc63e" />
<rect x="242.00" y="150.00" width="2.45" height="7.00" fill="#bfc63e" />
<rect x="247.00" y="150.00" width="2.35" height="7.00" fill="#bfc63e" />
<rect x="249.25" y="211.09" width="2.55" height="5.50" fill="#bfc63e" />
<rect x="251.70" y="230.19" width="2.55" height="5.50" fill="#bfc63e" />
<rect x="265.00" y="225.11" width="2.55" height="5.50" fill="#bfc63e" />
<rect x="267.45" y="209.64" width="2.55" height="5.50" fill="#bfc63e" />
<rect x="270.00" y="150.00" width="2.45" height="7.00" fill="#bfc63e" />
<rect x="272.35" y="165.08" width="2.55" height="5.50" fill="#bfc63e" />
<rect x="276.00" y="150.00" width="1.35" height="7.00" fill="#bfc63e" />
<rect x="277.25" y="176.82" width="2.55" height="5.50" fill="#bfc63e" />
<rect x="280.00" y="169.00" width="2.55" height="7.00" fill="#bfc63e" />
<rect x="287.00" y="218.21" width="2.10" height="5.50" fill="#bfc63e" />
<rect x="289.00" y="150.00" width="2.55" height="7.00" fill="#bfc63e" />
<rect x="291.90" y="165.05" width="2.55" height="5.50" fill="#bfc63e" />
<rect x="295.00" y="150.00" width="1.90" height="7.00" fill="#bfc63e" />
<rect x="300.00" y="150.00" width="1.80" height="7.00" fill="#bfc63e" />
<rect x="301.70" y="209.80" width="2.55" height="5.50" fill="#bfc63e" />
<rect x="323.00" y="150.00" width="2.55" height="7.00" fill="#bfc63e" />
<rect x="326.35" y="177.21" width="2.55" height="5.50" fill="#bfc63e" />
<rect x="329.00" y="150.00" width="2.35" height="7.00" fill="#bfc63e" />
<rect x="334.00" y="161.00" width="2.55" height="7.00" fill="#bfc63e" />
<rect x="340.00" y="203.01" width="2.55" height="5.50" fill="#bfc63e" />
<rect x="343.00" y="150.00" width="2.00" height="7.00" fill="#bfc63e" />
<rect x="344.90" y="201.16" width="2.55" height="5.50" fill="#bfc63e" />
<rect x="347.35" y="208.31" width="1.75" height="5.50" fill="#bfc63e" />
<rect x="349.00" y="150.00" width="2.55" height="7.00" fill="#bfc63e" />
<rect x="352.25" y="185.54" width="1.85" height="5.50" fill="#bfc63e" />
<rect x="354.00" y="150.00" width="2.55" height="7.00" fill="#bfc63e" />
<rect x="371.00" y="150.00" width="2.55" height="7.00" fill="#bfc63e" />
<rect x="373.45" y="176.14" width="2.55" height="5.50" fill="#bfc63e" />
<rect x="376.00" y="150.00" width="2.45" height="7.00" fill="#bfc63e" />
<rect x="382.00" y="150.00" width="1.35" height="7.00" fill="#bfc63e" />
<rect x="383.25" y="211.76" width="2.55" height="5.50" fill="#bfc63e" />
<rect x="385.70" y="210.21" width="2.55" height="5.50" fill="#bfc63e" />
<rect x="392.00" y="216.75" width="2.55" height="5.50" fill="#bfc63e" />
<rect x="394.45" y="217.48" width="1.65" height="5.50" fill="#bfc63e" />
<rect x="396.00" y="150.00" width="2.55" height="7.00" fill="#bfc63e" />
<rect x="399.35" y="173.49" width="2.55" height="5.50" fill="#bfc63e" />
<rect x="402.00" y="150.00" width="2.35" height="7.00" fill="#bfc63e" />
<rect x="406.00" y="162.00" width="2.55" height="7.00" fill="#bfc63e" />
<rect x="430.00" y="150.00" width="1.90" height="7.00" fill="#bfc63e" />
<rect x="431.80" y="165.09" width="2.55" height="5.50" fill="#bfc63e" />
<rect x="434.25" y="175.07" width="1.85" height="5.50" fill="#bfc63e" />
<rect x="436.00" y="150.00" width="2.55" height="7.00" fill="#bfc63e" />
<rect x="439.15" y="222.56" width="2.55" height="5.50" fill="#bfc63e" />
<rect x="448.45" y="205.88" width="1.65" height="5.50" fill="#bfc63e" />
<rect x="450.00" y="150.00" width="2.55" height="7.00" fill="#bfc63e" />
<rect x="453.35" y="187.35" width="2.55" height="5.50" fill="#bfc63e" />
<rect x="456.00" y="150.00" width="2.35" height="7.00" fill="#bfc63e" />
<rect x="458.25" y="172.80" width="1.85" height="5.50" fill="#bfc63e" />
<rect x="460.00" y="150.00" width="2.55" height="7.00" fill="#bfc63e" />
<rect x="477.00" y="150.00" width="2.00" height="7.00" fill="#bfc63e" />
<rect x="481.35" y="187.45" width="1.75" height="5.50" fill="#bfc63e" />
<rect x="483.00" y="150.00" width="2.55" height="7.00" fill="#bfc63e" />
<rect x="486.25" y="183.55" width="1.85" height="5.50" fill="#bfc63e" />
<rect x="488.00" y="150.00" width="2.55" height="7.00" fill="#bfc63e" />
<rect x="497.00" y="150.00" width="2.55" height="7.00" fill="#bfc63e" />
<rect x="503.00" y="150.00" width="1.45" height="7.00" fill="#bfc63e" />
<rect x="504.35" y="165.46" width="2.55" height="5.50" fill="#bfc63e" />
<rect x="508.00" y="150.00" width="1.35" height="7.00" fill="#bfc63e" />
<rect x="509.25" y="195.77" width="2.55" height="5.50" fill="#bfc63e" />
<rect x="532.00" y="150.00" width="2.55" height="7.00" fill="#bfc63e" />
<rect x="537.00" y="150.00" width="2.55" height="7.00" fill="#bfc63e" />
<rect x="539.80" y="185.73" width="2.30" height="5.50" fill="#bfc63e" />
<rect x="542.00" y="150.00" width="2.55" height="7.00" fill="#bfc63e" />
<rect x="544.70" y="210.00" width="2.55" height="5.50" fill="#bfc63e" />
<rect x="551.00" y="150.00" width="1.55" height="7.00" fill="#bfc63e" />
<rect x="557.00" y="150.00" width="2.55" height="7.00" fill="#bfc63e" />
<rect x="562.00" y="150.00" width="2.55" height="7.00" fill="#bfc63e" />
<rect x="564.70" y="219.68" width="2.55" height="5.50" fill="#bfc63e" />
<rect x="567.15" y="218.12" width="2.55" height="5.50" fill="#bfc63e" />
<rect x="584.00" y="150.00" width="2.55" height="7.00" fill="#bfc63e" />
<rect x="587.35" y="178.39" width="2.55" height="5.50" fill="#bfc63e" />
<rect x="590.00" y="150.00" width="2.35" height="7.00" fill="#bfc63e" />
<rect x="592.25" y="165.67" width="2.55" height="5.50" fill="#bfc63e" />
<rect x="595.00" y="162.00" width="2.55" height="7.00" fill="#bfc63e" />
<rect x="604.00" y="150.00" width="2.00" height="7.00" fill="#bfc63e" />
<rect x="605.90" y="208.19" width="2.55" height="5.50" fill="#bfc63e" />
<rect x="608.35" y="166.26" width="1.75" height="5.50" fill="#bfc63e" />
<rect x="610.00" y="150.00" width="2.55" height="7.00" fill="#bfc63e" />
<rect x="613.25" y="167.32" width="1.85" height="5.50" fill="#bfc63e" />
<rect x="615.00" y="150.00" width="2.55" height="7.00" fill="#bfc63e" />
<rect x="634.00" y="226.70" width="2.55" height="5.50" fill="#bfc63e" />
<rect x="636.45" y="222.01" width="1.65" height="5.50" fill="#bfc63e" />
<rect x="638.00" y="150.00" width="2.55" height="7.00" fill="#bfc63e" />
<rect x="641.35" y="179.72" width="2.55" height="5.50" fill="#bfc63e" />
<rect x="644.00" y="150.00" width="2.35" height="7.00" fill="#bfc63e" />
<rect x="646.25" y="174.62" width="1.85" height="5.50" fill="#bfc63e" />
<rect x="648.00" y="150.00" width="2.55" height="7.00" fill="#bfc63e" />
<rect x="654.00" y="180.00" width="2.55" height="7.00" fill="#bfc63e" />
<rect x="658.00" y="150.00" width="2.55" height="7.00" fill="#bfc63e" />
<rect x="33.20" y="274.00" width="1.50" height="16.00" fill="#37634b" />
<rect x="35.65" y="268.00" width="1.50" height="22.00" fill="#37634b" />
<rect x="30.75" y="268.00" width="1.50" height="22.00" fill="#37634b" />
<rect x="57.75" y="262.00" width="1.50" height="28.00" fill="#37634b" />
<rect x="60.20" y="262.00" width="1.50" height="28.00" fill="#37634b" />
<rect x="62.65" y="280.00" width="1.50" height="10.00" fill="#37634b" />
<rect x="87.10" y="262.00" width="1.50" height="28.00" fill="#37634b" />
<rect x="82.20" y="284.00" width="1.50" height="6.00" fill="#37634b" />
<rect x="79.75" y="274.00" width="1.50" height="16.00" fill="#37634b" />
<rect x="112.20" y="262.00" width="1.50" height="28.00" fill="#37634b" />
<rect x="114.65" y="268.00" width="1.50" height="22.00" fill="#37634b" />
<rect x="109.75" y="268.00" width="1.50" height="22.00" fill="#37634b" />
<rect x="135.20" y="280.00" width="1.50" height="10.00" fill="#37634b" />
<rect x="137.65" y="274.00" width="1.50" height="16.00" fill="#37634b" />
<rect x="140.10" y="268.00" width="1.50" height="22.00" fill="#37634b" />
<rect x="162.75" y="262.00" width="1.50" height="28.00" fill="#37634b" />
<rect x="167.65" y="280.00" width="1.50" height="10.00" fill="#37634b" />
<rect x="165.20" y="284.00" width="1.50" height="6.00" fill="#37634b" />
<rect x="184.75" y="262.00" width="1.50" height="28.00" fill="#37634b" />
<rect x="187.20" y="268.00" width="1.50" height="22.00" fill="#37634b" />
<rect x="192.10" y="268.00" width="1.50" height="22.00" fill="#37634b" />
<rect x="219.20" y="274.00" width="1.50" height="16.00" fill="#37634b" />
<rect x="216.75" y="274.00" width="1.50" height="16.00" fill="#37634b" />
<rect x="226.55" y="284.00" width="1.50" height="6.00" fill="#37634b" />
<rect x="241.20" y="284.00" width="1.50" height="6.00" fill="#37634b" />
<rect x="243.65" y="284.00" width="1.50" height="6.00" fill="#37634b" />
<rect x="246.10" y="284.00" width="1.50" height="6.00" fill="#37634b" />
<rect x="266.75" y="268.00" width="1.50" height="22.00" fill="#37634b" />
<rect x="274.10" y="280.00" width="1.50" height="10.00" fill="#37634b" />
<rect x="271.65" y="268.00" width="1.50" height="22.00" fill="#37634b" />
<rect x="291.20" y="262.00" width="1.50" height="28.00" fill="#37634b" />
<rect x="296.10" y="280.00" width="1.50" height="10.00" fill="#37634b" />
<rect x="288.75" y="280.00" width="1.50" height="10.00" fill="#37634b" />
<rect x="328.10" y="268.00" width="1.50" height="22.00" fill="#37634b" />
<rect x="323.20" y="280.00" width="1.50" height="10.00" fill="#37634b" />
<rect x="320.75" y="280.00" width="1.50" height="10.00" fill="#37634b" />
<rect x="341.75" y="268.00" width="1.50" height="22.00" fill="#37634b" />
<rect x="344.20" y="262.00" width="1.50" height="28.00" fill="#37634b" />
<rect x="351.55" y="280.00" width="1.50" height="10.00" fill="#37634b" />
<rect x="375.20" y="284.00" width="1.50" height="6.00" fill="#37634b" />
<rect x="372.75" y="284.00" width="1.50" height="6.00" fill="#37634b" />
<rect x="380.10" y="284.00" width="1.50" height="6.00" fill="#37634b" />
<rect x="393.75" y="274.00" width="1.50" height="16.00" fill="#37634b" />
<rect x="401.10" y="280.00" width="1.50" height="10.00" fill="#37634b" />
<rect x="398.65" y="274.00" width="1.50" height="16.00" fill="#37634b" />
<rect x="426.20" y="268.00" width="1.50" height="22.00" fill="#37634b" />
<rect x="431.10" y="262.00" width="1.50" height="28.00" fill="#37634b" />
<rect x="428.65" y="262.00" width="1.50" height="28.00" fill="#37634b" />
<rect x="450.20" y="268.00" width="1.50" height="22.00" fill="#37634b" />
<rect x="452.65" y="268.00" width="1.50" height="22.00" fill="#37634b" />
<rect x="447.75" y="280.00" width="1.50" height="10.00" fill="#37634b" />
<rect x="483.10" y="262.00" width="1.50" height="28.00" fill="#37634b" />
<rect x="485.55" y="274.00" width="1.50" height="16.00" fill="#37634b" />
<rect x="480.65" y="284.00" width="1.50" height="6.00" fill="#37634b" />
<rect x="503.65" y="274.00" width="1.50" height="16.00" fill="#37634b" />
<rect x="498.75" y="274.00" width="1.50" height="16.00" fill="#37634b" />
<rect x="501.20" y="262.00" width="1.50" height="28.00" fill="#37634b" />
<rect x="534.20" y="274.00" width="1.50" height="16.00" fill="#37634b" />
<rect x="536.65" y="284.00" width="1.50" height="6.00" fill="#37634b" />
<rect x="531.75" y="262.00" width="1.50" height="28.00" fill="#37634b" />
<rect x="554.20" y="262.00" width="1.50" height="28.00" fill="#37634b" />
<rect x="561.55" y="280.00" width="1.50" height="10.00" fill="#37634b" />
<rect x="556.65" y="274.00" width="1.50" height="16.00" fill="#37634b" />
<rect x="584.20" y="284.00" width="1.50" height="6.00" fill="#37634b" />
<rect x="589.10" y="280.00" width="1.50" height="10.00" fill="#37634b" />
<rect x="586.65" y="274.00" width="1.50" height="16.00" fill="#37634b" />
<rect x="610.10" y="280.00" width="1.50" height="10.00" fill="#37634b" />
<rect x="605.20" y="262.00" width="1.50" height="28.00" fill="#37634b" />
<rect x="602.75" y="268.00" width="1.50" height="22.00" fill="#37634b" />
<rect x="640.65" y="262.00" width="1.50" height="28.00" fill="#37634b" />
<rect x="635.75" y="280.00" width="1.50" height="10.00" fill="#37634b" />
<rect x="643.10" y="262.00" width="1.50" height="28.00" fill="#37634b" />
</g>
<line x1="28.7" y1="291.1" x2="660.7" y2="291.1" stroke="#1bbde6" stroke-width="1.3"/>
<line x1="660.7" y1="292" x2="673" y2="292" stroke="#053446" stroke-width="1"/>
<line x1="28.7" y1="111.7" x2="28.7" y2="455.0" stroke="#5a5a5a" stroke-width="0.6"/>
<line x1="28.7" y1="455.0" x2="660.7" y2="455.0" stroke="#8a8a8a" stroke-width="0.8"/>
<line x1="28.7" y1="443.0" x2="28.7" y2="455.0" stroke="#8a8a8a" stroke-width="0.7"/>
<line x1="28.7" y1="111.7" x2="28.7" y2="124.7" stroke="#8fb09c" stroke-width="0.7"/>
<line x1="35.0" y1="452.0" x2="35.0" y2="455.0" stroke="#8a8a8a" stroke-width="0.7"/>
<line x1="35.0" y1="111.7" x2="35.0" y2="114.2" stroke="#8fb09c" stroke-width="0.7"/>
<line x1="41.3" y1="452.0" x2="41.3" y2="455.0" stroke="#8a8a8a" stroke-width="0.7"/>
<line x1="41.3" y1="111.7" x2="41.3" y2="114.2" stroke="#8fb09c" stroke-width="0.7"/>
<line x1="47.7" y1="452.0" x2="47.7" y2="455.0" stroke="#8a8a8a" stroke-width="0.7"/>
<line x1="47.7" y1="111.7" x2="47.7" y2="114.2" stroke="#8fb09c" stroke-width="0.7"/>
<line x1="54.0" y1="452.0" x2="54.0" y2="455.0" stroke="#8a8a8a" stroke-width="0.7"/>
<line x1="54.0" y1="111.7" x2="54.0" y2="114.2" stroke="#8fb09c" stroke-width="0.7"/>
<line x1="60.3" y1="449.0" x2="60.3" y2="455.0" stroke="#8a8a8a" stroke-width="0.7"/>
<line x1="60.3" y1="111.7" x2="60.3" y2="116.7" stroke="#8fb09c" stroke-width="0.7"/>
<line x1="66.6" y1="452.0" x2="66.6" y2="455.0" stroke="#8a8a8a" stroke-width="0.7"/>
<line x1="66.6" y1="111.7" x2="66.6" y2="114.2" stroke="#8fb09c" stroke-width="0.7"/>
<line x1="72.9" y1="452.0" x2="72.9" y2="455.0" stroke="#8a8a8a" stroke-width="0.7"/>
<line x1="72.9" y1="111.7" x2="72.9" y2="114.2" stroke="#8fb09c" stroke-width="0.7"/>
<line x1="79.3" y1="452.0" x2="79.3" y2="455.0" stroke="#8a8a8a" stroke-width="0.7"/>
<line x1="79.3" y1="111.7" x2="79.3" y2="114.2" stroke="#8fb09c" stroke-width="0.7"/>
<line x1="85.6" y1="452.0" x2="85.6" y2="455.0" stroke="#8a8a8a" stroke-width="0.7"/>
<line x1="85.6" y1="111.7" x2="85.6" y2="114.2" stroke="#8fb09c" stroke-width="0.7"/>
<line x1="91.9" y1="443.0" x2="91.9" y2="455.0" stroke="#8a8a8a" stroke-width="0.7"/>
<line x1="91.9" y1="111.7" x2="91.9" y2="124.7" stroke="#8fb09c" stroke-width="0.7"/>
<line x1="98.2" y1="452.0" x2="98.2" y2="455.0" stroke="#8a8a8a" stroke-width="0.7"/>
<line x1="98.2" y1="111.7" x2="98.2" y2="114.2" stroke="#8fb09c" stroke-width="0.7"/>
<line x1="104.5" y1="452.0" x2="104.5" y2="455.0" stroke="#8a8a8a" stroke-width="0.7"/>
<line x1="104.5" y1="111.7" x2="104.5" y2="114.2" stroke="#8fb09c" stroke-width="0.7"/>
<line x1="110.9" y1="452.0" x2="110.9" y2="455.0" stroke="#8a8a8a" stroke-width="0.7"/>
<line x1="110.9" y1="111.7" x2="110.9" y2="114.2" stroke="#8fb09c" stroke-width="0.7"/>
<line x1="117.2" y1="452.0" x2="117.2" y2="455.0" stroke="#8a8a8a" stroke-width="0.7"/>
<line x1="117.2" y1="111.7" x2="117.2" y2="114.2" stroke="#8fb09c" stroke-width="0.7"/>
<line x1="123.5" y1="449.0" x2="123.5" y2="455.0" stroke="#8a8a8a" stroke-width="0.7"/>
<line x1="123.5" y1="111.7" x2="123.5" y2="116.7" stroke="#8fb09c" stroke-width="0.7"/>
<line x1="129.8" y1="452.0" x2="129.8" y2="455.0" stroke="#8a8a8a" stroke-width="0.7"/>
<line x1="129.8" y1="111.7" x2="129.8" y2="114.2" stroke="#8fb09c" stroke-width="0.7"/>
<line x1="136.1" y1="452.0" x2="136.1" y2="455.0" stroke="#8a8a8a" stroke-width="0.7"/>
<line x1="136.1" y1="111.7" x2="136.1" y2="114.2" stroke="#8fb09c" stroke-width="0.7"/>
<line x1="142.5" y1="452.0" x2="142.5" y2="455.0" stroke="#8a8a8a" stroke-width="0.7"/>
<line x1="142.5" y1="111.7" x2="142.5" y2="114.2" stroke="#8fb09c" stroke-width="0.7"/>
<line x1="148.8" y1="452.0" x2="148.8" y2="455.0" stroke="#8a8a8a" stroke-width="0.7"/>
<line x1="148.8" y1="111.7" x2="148.8" y2="114.2" stroke="#8fb09c" stroke-width="0.7"/>
<line x1="155.1" y1="443.0" x2="155.1" y2="455.0" stroke="#8a8a8a" stroke-width="0.7"/>
<line x1="155.1" y1="111.7" x2="155.1" y2="124.7" stroke="#8fb09c" stroke-width="0.7"/>
<line x1="161.4" y1="452.0" x2="161.4" y2="455.0" stroke="#8a8a8a" stroke-width="0.7"/>
<line x1="161.4" y1="111.7" x2="161.4" y2="114.2" stroke="#8fb09c" stroke-width="0.7"/>
<line x1="167.7" y1="452.0" x2="167.7" y2="455.0" stroke="#8a8a8a" stroke-width="0.7"/>
<line x1="167.7" y1="111.7" x2="167.7" y2="114.2" stroke="#8fb09c" stroke-width="0.7"/>
<line x1="174.1" y1="452.0" x2="174.1" y2="455.0" stroke="#8a8a8a" stroke-width="0.7"/>
<line x1="174.1" y1="111.7" x2="174.1" y2="114.2" stroke="#8fb09c" stroke-width="0.7"/>
<line x1="180.4" y1="452.0" x2="180.4" y2="455.0" stroke="#8a8a8a" stroke-width="0.7"/>
<line x1="180.4" y1="111.7" x2="180.4" y2="114.2" stroke="#8fb09c" stroke-width="0.7"/>
<line x1="186.7" y1="449.0" x2="186.7" y2="455.0" stroke="#8a8a8a" stroke-width="0.7"/>
<line x1="186.7" y1="111.7" x2="186.7" y2="116.7" stroke="#8fb09c" stroke-width="0.7"/>
<line x1="193.0" y1="452.0" x2="193.0" y2="455.0" stroke="#8a8a8a" stroke-width="0.7"/>
<line x1="193.0" y1="111.7" x2="193.0" y2="114.2" stroke="#8fb09c" stroke-width="0.7"/>
<line x1="199.3" y1="452.0" x2="199.3" y2="455.0" stroke="#8a8a8a" stroke-width="0.7"/>
<line x1="199.3" y1="111.7" x2="199.3" y2="114.2" stroke="#8fb09c" stroke-width="0.7"/>
<line x1="205.7" y1="452.0" x2="205.7" y2="455.0" stroke="#8a8a8a" stroke-width="0.7"/>
<line x1="205.7" y1="111.7" x2="205.7" y2="114.2" stroke="#8fb09c" stroke-width="0.7"/>
<line x1="212.0" y1="452.0" x2="212.0" y2="455.0" stroke="#8a8a8a" stroke-width="0.7"/>
<line x1="212.0" y1="111.7" x2="212.0" y2="114.2" stroke="#8fb09c" stroke-width="0.7"/>
<line x1="218.3" y1="443.0" x2="218.3" y2="455.0" stroke="#8a8a8a" stroke-width="0.7"/>
<line x1="218.3" y1="111.7" x2="218.3" y2="124.7" stroke="#8fb09c" stroke-width="0.7"/>
<line x1="224.6" y1="452.0" x2="224.6" y2="455.0" stroke="#8a8a8a" stroke-width="0.7"/>
<line x1="224.6" y1="111.7" x2="224.6" y2="114.2" stroke="#8fb09c" stroke-width="0.7"/>
<line x1="230.9" y1="452.0" x2="230.9" y2="455.0" stroke="#8a8a8a" stroke-width="0.7"/>
<line x1="230.9" y1="111.7" x2="230.9" y2="114.2" stroke="#8fb09c" stroke-width="0.7"/>
<line x1="237.3" y1="452.0" x2="237.3" y2="455.0" stroke="#8a8a8a" stroke-width="0.7"/>
<line x1="237.3" y1="111.7" x2="237.3" y2="114.2" stroke="#8fb09c" stroke-width="0.7"/>
<line x1="243.6" y1="452.0" x2="243.6" y2="455.0" stroke="#8a8a8a" stroke-width="0.7"/>
<line x1="243.6" y1="111.7" x2="243.6" y2="114.2" stroke="#8fb09c" stroke-width="0.7"/>
<line x1="249.9" y1="449.0" x2="249.9" y2="455.0" stroke="#8a8a8a" stroke-width="0.7"/>
<line x1="249.9" y1="111.7" x2="249.9" y2="116.7" stroke="#8fb09c" stroke-width="0.7"/>
<line x1="256.2" y1="452.0" x2="256.2" y2="455.0" stroke="#8a8a8a" stroke-width="0.7"/>
<line x1="256.2" y1="111.7" x2="256.2" y2="114.2" stroke="#8fb09c" stroke-width="0.7"/>
<line x1="262.5" y1="452.0" x2="262.5" y2="455.0" stroke="#8a8a8a" stroke-width="0.7"/>
<line x1="262.5" y1="111.7" x2="262.5" y2="114.2" stroke="#8fb09c" stroke-width="0.7"/>
<line x1="268.9" y1="452.0" x2="268.9" y2="455.0" stroke="#8a8a8a" stroke-width="0.7"/>
<line x1="268.9" y1="111.7" x2="268.9" y2="114.2" stroke="#8fb09c" stroke-width="0.7"/>
<line x1="275.2" y1="452.0" x2="275.2" y2="455.0" stroke="#8a8a8a" stroke-width="0.7"/>
<line x1="275.2" y1="111.7" x2="275.2" y2="114.2" stroke="#8fb09c" stroke-width="0.7"/>
<line x1="281.5" y1="443.0" x2="281.5" y2="455.0" stroke="#8a8a8a" stroke-width="0.7"/>
<line x1="281.5" y1="111.7" x2="281.5" y2="124.7" stroke="#8fb09c" stroke-width="0.7"/>
<line x1="287.8" y1="452.0" x2="287.8" y2="455.0" stroke="#8a8a8a" stroke-width="0.7"/>
<line x1="287.8" y1="111.7" x2="287.8" y2="114.2" stroke="#8fb09c" stroke-width="0.7"/>
<line x1="294.1" y1="452.0" x2="294.1" y2="455.0" stroke="#8a8a8a" stroke-width="0.7"/>
<line x1="294.1" y1="111.7" x2="294.1" y2="114.2" stroke="#8fb09c" stroke-width="0.7"/>
<line x1="300.5" y1="452.0" x2="300.5" y2="455.0" stroke="#8a8a8a" stroke-width="0.7"/>
<line x1="300.5" y1="111.7" x2="300.5" y2="114.2" stroke="#8fb09c" stroke-width="0.7"/>
<line x1="306.8" y1="452.0" x2="306.8" y2="455.0" stroke="#8a8a8a" stroke-width="0.7"/>
<line x1="306.8" y1="111.7" x2="306.8" y2="114.2" stroke="#8fb09c" stroke-width="0.7"/>
<line x1="313.1" y1="449.0" x2="313.1" y2="455.0" stroke="#8a8a8a" stroke-width="0.7"/>
<line x1="313.1" y1="111.7" x2="313.1" y2="116.7" stroke="#8fb09c" stroke-width="0.7"/>
<line x1="319.4" y1="452.0" x2="319.4" y2="455.0" stroke="#8a8a8a" stroke-width="0.7"/>
<line x1="319.4" y1="111.7" x2="319.4" y2="114.2" stroke="#8fb09c" stroke-width="0.7"/>
<line x1="325.7" y1="452.0" x2="325.7" y2="455.0" stroke="#8a8a8a" stroke-width="0.7"/>
<line x1="325.7" y1="111.7" x2="325.7" y2="114.2" stroke="#8fb09c" stroke-width="0.7"/>
<line x1="332.1" y1="452.0" x2="332.1" y2="455.0" stroke="#8a8a8a" stroke-width="0.7"/>
<line x1="332.1" y1="111.7" x2="332.1" y2="114.2" stroke="#8fb09c" stroke-width="0.7"/>
<line x1="338.4" y1="452.0" x2="338.4" y2="455.0" stroke="#8a8a8a" stroke-width="0.7"/>
<line x1="338.4" y1="111.7" x2="338.4" y2="114.2" stroke="#8fb09c" stroke-width="0.7"/>
<line x1="344.7" y1="443.0" x2="344.7" y2="455.0" stroke="#8a8a8a" stroke-width="0.7"/>
<line x1="344.7" y1="111.7" x2="344.7" y2="124.7" stroke="#8fb09c" stroke-width="0.7"/>
<line x1="351.0" y1="452.0" x2="351.0" y2="455.0" stroke="#8a8a8a" stroke-width="0.7"/>
<line x1="351.0" y1="111.7" x2="351.0" y2="114.2" stroke="#8fb09c" stroke-width="0.7"/>
<line x1="357.3" y1="452.0" x2="357.3" y2="455.0" stroke="#8a8a8a" stroke-width="0.7"/>
<line x1="357.3" y1="111.7" x2="357.3" y2="114.2" stroke="#8fb09c" stroke-width="0.7"/>
<line x1="363.7" y1="452.0" x2="363.7" y2="455.0" stroke="#8a8a8a" stroke-width="0.7"/>
<line x1="363.7" y1="111.7" x2="363.7" y2="114.2" stroke="#8fb09c" stroke-width="0.7"/>
<line x1="370.0" y1="452.0" x2="370.0" y2="455.0" stroke="#8a8a8a" stroke-width="0.7"/>
<line x1="370.0" y1="111.7" x2="370.0" y2="114.2" stroke="#8fb09c" stroke-width="0.7"/>
<line x1="376.3" y1="449.0" x2="376.3" y2="455.0" stroke="#8a8a8a" stroke-width="0.7"/>
<line x1="376.3" y1="111.7" x2="376.3" y2="116.7" stroke="#8fb09c" stroke-width="0.7"/>
<line x1="382.6" y1="452.0" x2="382.6" y2="455.0" stroke="#8a8a8a" stroke-width="0.7"/>
<line x1="382.6" y1="111.7" x2="382.6" y2="114.2" stroke="#8fb09c" stroke-width="0.7"/>
<line x1="388.9" y1="452.0" x2="388.9" y2="455.0" stroke="#8a8a8a" stroke-width="0.7"/>
<line x1="388.9" y1="111.7" x2="388.9" y2="114.2" stroke="#8fb09c" stroke-width="0.7"/>
<line x1="395.3" y1="452.0" x2="395.3" y2="455.0" stroke="#8a8a8a" stroke-width="0.7"/>
<line x1="395.3" y1="111.7" x2="395.3" y2="114.2" stroke="#8fb09c" stroke-width="0.7"/>
<line x1="401.6" y1="452.0" x2="401.6" y2="455.0" stroke="#8a8a8a" stroke-width="0.7"/>
<line x1="401.6" y1="111.7" x2="401.6" y2="114.2" stroke="#8fb09c" stroke-width="0.7"/>
<line x1="407.9" y1="443.0" x2="407.9" y2="455.0" stroke="#8a8a8a" stroke-width="0.7"/>
<line x1="407.9" y1="111.7" x2="407.9" y2="124.7" stroke="#8fb09c" stroke-width="0.7"/>
<line x1="414.2" y1="452.0" x2="414.2" y2="455.0" stroke="#8a8a8a" stroke-width="0.7"/>
<line x1="414.2" y1="111.7" x2="414.2" y2="114.2" stroke="#8fb09c" stroke-width="0.7"/>
<line x1="420.5" y1="452.0" x2="420.5" y2="455.0" stroke="#8a8a8a" stroke-width="0.7"/>
<line x1="420.5" y1="111.7" x2="420.5" y2="114.2" stroke="#8fb09c" stroke-width="0.7"/>
<line x1="426.9" y1="452.0" x2="426.9" y2="455.0" stroke="#8a8a8a" stroke-width="0.7"/>
<line x1="426.9" y1="111.7" x2="426.9" y2="114.2" stroke="#8fb09c" stroke-width="0.7"/>
<line x1="433.2" y1="452.0" x2="433.2" y2="455.0" stroke="#8a8a8a" stroke-width="0.7"/>
<line x1="433.2" y1="111.7" x2="433.2" y2="114.2" stroke="#8fb09c" stroke-width="0.7"/>
<line x1="439.5" y1="449.0" x2="439.5" y2="455.0" stroke="#8a8a8a" stroke-width="0.7"/>
<line x1="439.5" y1="111.7" x2="439.5" y2="116.7" stroke="#8fb09c" stroke-width="0.7"/>
<line x1="445.8" y1="452.0" x2="445.8" y2="455.0" stroke="#8a8a8a" stroke-width="0.7"/>
<line x1="445.8" y1="111.7" x2="445.8" y2="114.2" stroke="#8fb09c" stroke-width="0.7"/>
<line x1="452.1" y1="452.0" x2="452.1" y2="455.0" stroke="#8a8a8a" stroke-width="0.7"/>
<line x1="452.1" y1="111.7" x2="452.1" y2="114.2" stroke="#8fb09c" stroke-width="0.7"/>
<line x1="458.5" y1="452.0" x2="458.5" y2="455.0" stroke="#8a8a8a" stroke-width="0.7"/>
<line x1="458.5" y1="111.7" x2="458.5" y2="114.2" stroke="#8fb09c" stroke-width="0.7"/>
<line x1="464.8" y1="452.0" x2="464.8" y2="455.0" stroke="#8a8a8a" stroke-width="0.7"/>
<line x1="464.8" y1="111.7" x2="464.8" y2="114.2" stroke="#8fb09c" stroke-width="0.7"/>
<line x1="471.1" y1="443.0" x2="471.1" y2="455.0" stroke="#8a8a8a" stroke-width="0.7"/>
<line x1="471.1" y1="111.7" x2="471.1" y2="124.7" stroke="#8fb09c" stroke-width="0.7"/>
<line x1="477.4" y1="452.0" x2="477.4" y2="455.0" stroke="#8a8a8a" stroke-width="0.7"/>
<line x1="477.4" y1="111.7" x2="477.4" y2="114.2" stroke="#8fb09c" stroke-width="0.7"/>
<line x1="483.7" y1="452.0" x2="483.7" y2="455.0" stroke="#8a8a8a" stroke-width="0.7"/>
<line x1="483.7" y1="111.7" x2="483.7" y2="114.2" stroke="#8fb09c" stroke-width="0.7"/>
<line x1="490.1" y1="452.0" x2="490.1" y2="455.0" stroke="#8a8a8a" stroke-width="0.7"/>
<line x1="490.1" y1="111.7" x2="490.1" y2="114.2" stroke="#8fb09c" stroke-width="0.7"/>
<line x1="496.4" y1="452.0" x2="496.4" y2="455.0" stroke="#8a8a8a" stroke-width="0.7"/>
<line x1="496.4" y1="111.7" x2="496.4" y2="114.2" stroke="#8fb09c" stroke-width="0.7"/>
<line x1="502.7" y1="449.0" x2="502.7" y2="455.0" stroke="#8a8a8a" stroke-width="0.7"/>
<line x1="502.7" y1="111.7" x2="502.7" y2="116.7" stroke="#8fb09c" stroke-width="0.7"/>
<line x1="509.0" y1="452.0" x2="509.0" y2="455.0" stroke="#8a8a8a" stroke-width="0.7"/>
<line x1="509.0" y1="111.7" x2="509.0" y2="114.2" stroke="#8fb09c" stroke-width="0.7"/>
<line x1="515.3" y1="452.0" x2="515.3" y2="455.0" stroke="#8a8a8a" stroke-width="0.7"/>
<line x1="515.3" y1="111.7" x2="515.3" y2="114.2" stroke="#8fb09c" stroke-width="0.7"/>
<line x1="521.7" y1="452.0" x2="521.7" y2="455.0" stroke="#8a8a8a" stroke-width="0.7"/>
<line x1="521.7" y1="111.7" x2="521.7" y2="114.2" stroke="#8fb09c" stroke-width="0.7"/>
<line x1="528.0" y1="452.0" x2="528.0" y2="455.0" stroke="#8a8a8a" stroke-width="0.7"/>
<line x1="528.0" y1="111.7" x2="528.0" y2="114.2" stroke="#8fb09c" stroke-width="0.7"/>
<line x1="534.3" y1="443.0" x2="534.3" y2="455.0" stroke="#8a8a8a" stroke-width="0.7"/>
<line x1="534.3" y1="111.7" x2="534.3" y2="124.7" stroke="#8fb09c" stroke-width="0.7"/>
<line x1="540.6" y1="452.0" x2="540.6" y2="455.0" stroke="#8a8a8a" stroke-width="0.7"/>
<line x1="540.6" y1="111.7" x2="540.6" y2="114.2" stroke="#8fb09c" stroke-width="0.7"/>
<line x1="546.9" y1="452.0" x2="546.9" y2="455.0" stroke="#8a8a8a" stroke-width="0.7"/>
<line x1="546.9" y1="111.7" x2="546.9" y2="114.2" stroke="#8fb09c" stroke-width="0.7"/>
<line x1="553.3" y1="452.0" x2="553.3" y2="455.0" stroke="#8a8a8a" stroke-width="0.7"/>
<line x1="553.3" y1="111.7" x2="553.3" y2="114.2" stroke="#8fb09c" stroke-width="0.7"/>
<line x1="559.6" y1="452.0" x2="559.6" y2="455.0" stroke="#8a8a8a" stroke-width="0.7"/>
<line x1="559.6" y1="111.7" x2="559.6" y2="114.2" stroke="#8fb09c" stroke-width="0.7"/>
<line x1="565.9" y1="449.0" x2="565.9" y2="455.0" stroke="#8a8a8a" stroke-width="0.7"/>
<line x1="565.9" y1="111.7" x2="565.9" y2="116.7" stroke="#8fb09c" stroke-width="0.7"/>
<line x1="572.2" y1="452.0" x2="572.2" y2="455.0" stroke="#8a8a8a" stroke-width="0.7"/>
<line x1="572.2" y1="111.7" x2="572.2" y2="114.2" stroke="#8fb09c" stroke-width="0.7"/>
<line x1="578.5" y1="452.0" x2="578.5" y2="455.0" stroke="#8a8a8a" stroke-width="0.7"/>
<line x1="578.5" y1="111.7" x2="578.5" y2="114.2" stroke="#8fb09c" stroke-width="0.7"/>
<line x1="584.9" y1="452.0" x2="584.9" y2="455.0" stroke="#8a8a8a" stroke-width="0.7"/>
<line x1="584.9" y1="111.7" x2="584.9" y2="114.2" stroke="#8fb09c" stroke-width="0.7"/>
<line x1="591.2" y1="452.0" x2="591.2" y2="455.0" stroke="#8a8a8a" stroke-width="0.7"/>
<line x1="591.2" y1="111.7" x2="591.2" y2="114.2" stroke="#8fb09c" stroke-width="0.7"/>
<line x1="597.5" y1="443.0" x2="597.5" y2="455.0" stroke="#8a8a8a" stroke-width="0.7"/>
<line x1="597.5" y1="111.7" x2="597.5" y2="124.7" stroke="#8fb09c" stroke-width="0.7"/>
<line x1="603.8" y1="452.0" x2="603.8" y2="455.0" stroke="#8a8a8a" stroke-width="0.7"/>
<line x1="603.8" y1="111.7" x2="603.8" y2="114.2" stroke="#8fb09c" stroke-width="0.7"/>
<line x1="610.1" y1="452.0" x2="610.1" y2="455.0" stroke="#8a8a8a" stroke-width="0.7"/>
<line x1="610.1" y1="111.7" x2="610.1" y2="114.2" stroke="#8fb09c" stroke-width="0.7"/>
<line x1="616.5" y1="452.0" x2="616.5" y2="455.0" stroke="#8a8a8a" stroke-width="0.7"/>
<line x1="616.5" y1="111.7" x2="616.5" y2="114.2" stroke="#8fb09c" stroke-width="0.7"/>
<line x1="622.8" y1="452.0" x2="622.8" y2="455.0" stroke="#8a8a8a" stroke-width="0.7"/>
<line x1="622.8" y1="111.7" x2="622.8" y2="114.2" stroke="#8fb09c" stroke-width="0.7"/>
<line x1="629.1" y1="449.0" x2="629.1" y2="455.0" stroke="#8a8a8a" stroke-width="0.7"/>
<line x1="629.1" y1="111.7" x2="629.1" y2="116.7" stroke="#8fb09c" stroke-width="0.7"/>
<line x1="635.4" y1="452.0" x2="635.4" y2="455.0" stroke="#8a8a8a" stroke-width="0.7"/>
<line x1="635.4" y1="111.7" x2="635.4" y2="114.2" stroke="#8fb09c" stroke-width="0.7"/>
<line x1="641.7" y1="452.0" x2="641.7" y2="455.0" stroke="#8a8a8a" stroke-width="0.7"/>
<line x1="641.7" y1="111.7" x2="641.7" y2="114.2" stroke="#8fb09c" stroke-width="0.7"/>
<line x1="648.1" y1="452.0" x2="648.1" y2="455.0" stroke="#8a8a8a" stroke-width="0.7"/>
<line x1="648.1" y1="111.7" x2="648.1" y2="114.2" stroke="#8fb09c" stroke-width="0.7"/>
<line x1="654.4" y1="452.0" x2="654.4" y2="455.0" stroke="#8a8a8a" stroke-width="0.7"/>
<line x1="654.4" y1="111.7" x2="654.4" y2="114.2" stroke="#8fb09c" stroke-width="0.7"/>
<line x1="660.7" y1="443.0" x2="660.7" y2="455.0" stroke="#8a8a8a" stroke-width="0.7"/>
<line x1="660.7" y1="111.7" x2="660.7" y2="124.7" stroke="#8fb09c" stroke-width="0.7"/>
<line x1="28.7" y1="111.7" x2="32.7" y2="111.7" stroke="#8fa898" stroke-width="0.6"/>
<line x1="656.7" y1="111.7" x2="660.7" y2="111.7" stroke="#8fa898" stroke-width="0.6"/>
<line x1="28.7" y1="115.1" x2="30.9" y2="115.1" stroke="#8fa898" stroke-width="0.6"/>
<line x1="658.5" y1="115.1" x2="660.7" y2="115.1" stroke="#8fa898" stroke-width="0.6"/>
<line x1="28.7" y1="118.6" x2="30.9" y2="118.6" stroke="#8fa898" stroke-width="0.6"/>
<line x1="658.5" y1="118.6" x2="660.7" y2="118.6" stroke="#8fa898" stroke-width="0.6"/>
<line x1="28.7" y1="122.0" x2="30.9" y2="122.0" stroke="#8fa898" stroke-width="0.6"/>
<line x1="658.5" y1="122.0" x2="660.7" y2="122.0" stroke="#8fa898" stroke-width="0.6"/>
<line x1="28.7" y1="125.4" x2="30.9" y2="125.4" stroke="#8fa898" stroke-width="0.6"/>
<line x1="658.5" y1="125.4" x2="660.7" y2="125.4" stroke="#8fa898" stroke-width="0.6"/>
<line x1="28.7" y1="128.9" x2="33.2" y2="128.9" stroke="#8fa898" stroke-width="0.6"/>
<line x1="656.2" y1="128.9" x2="660.7" y2="128.9" stroke="#8fa898" stroke-width="0.6"/>
<line x1="28.7" y1="132.3" x2="30.9" y2="132.3" stroke="#8fa898" stroke-width="0.6"/>
<line x1="658.5" y1="132.3" x2="660.7" y2="132.3" stroke="#8fa898" stroke-width="0.6"/>
<line x1="28.7" y1="135.7" x2="30.9" y2="135.7" stroke="#8fa898" stroke-width="0.6"/>
<line x1="658.5" y1="135.7" x2="660.7" y2="135.7" stroke="#8fa898" stroke-width="0.6"/>
<line x1="28.7" y1="139.2" x2="30.9" y2="139.2" stroke="#8fa898" stroke-width="0.6"/>
<line x1="658.5" y1="139.2" x2="660.7" y2="139.2" stroke="#8fa898" stroke-width="0.6"/>
<line x1="28.7" y1="142.6" x2="30.9" y2="142.6" stroke="#8fa898" stroke-width="0.6"/>
<line x1="658.5" y1="142.6" x2="660.7" y2="142.6" stroke="#8fa898" stroke-width="0.6"/>
<line x1="28.7" y1="146.0" x2="32.7" y2="146.0" stroke="#8fa898" stroke-width="0.6"/>
<line x1="656.7" y1="146.0" x2="660.7" y2="146.0" stroke="#8fa898" stroke-width="0.6"/>
<line x1="28.7" y1="149.5" x2="30.9" y2="149.5" stroke="#8fa898" stroke-width="0.6"/>
<line x1="658.5" y1="149.5" x2="660.7" y2="149.5" stroke="#8fa898" stroke-width="0.6"/>
<line x1="28.7" y1="152.9" x2="30.9" y2="152.9" stroke="#8fa898" stroke-width="0.6"/>
<line x1="658.5" y1="152.9" x2="660.7" y2="152.9" stroke="#8fa898" stroke-width="0.6"/>
<line x1="28.7" y1="156.3" x2="30.9" y2="156.3" stroke="#8fa898" stroke-width="0.6"/>
<line x1="658.5" y1="156.3" x2="660.7" y2="156.3" stroke="#8fa898" stroke-width="0.6"/>
<line x1="28.7" y1="159.8" x2="30.9" y2="159.8" stroke="#8fa898" stroke-width="0.6"/>
<line x1="658.5" y1="159.8" x2="660.7" y2="159.8" stroke="#8fa898" stroke-width="0.6"/>
<line x1="28.7" y1="163.2" x2="33.2" y2="163.2" stroke="#8fa898" stroke-width="0.6"/>
<line x1="656.2" y1="163.2" x2="660.7" y2="163.2" stroke="#8fa898" stroke-width="0.6"/>
<line x1="28.7" y1="166.6" x2="30.9" y2="166.6" stroke="#8fa898" stroke-width="0.6"/>
<line x1="658.5" y1="166.6" x2="660.7" y2="166.6" stroke="#8fa898" stroke-width="0.6"/>
<line x1="28.7" y1="170.1" x2="30.9" y2="170.1" stroke="#8fa898" stroke-width="0.6"/>
<line x1="658.5" y1="170.1" x2="660.7" y2="170.1" stroke="#8fa898" stroke-width="0.6"/>
<line x1="28.7" y1="173.5" x2="30.9" y2="173.5" stroke="#8fa898" stroke-width="0.6"/>
<line x1="658.5" y1="173.5" x2="660.7" y2="173.5" stroke="#8fa898" stroke-width="0.6"/>
<line x1="28.7" y1="176.9" x2="30.9" y2="176.9" stroke="#8fa898" stroke-width="0.6"/>
<line x1="658.5" y1="176.9" x2="660.7" y2="176.9" stroke="#8fa898" stroke-width="0.6"/>
<line x1="28.7" y1="180.4" x2="32.7" y2="180.4" stroke="#8fa898" stroke-width="0.6"/>
<line x1="656.7" y1="180.4" x2="660.7" y2="180.4" stroke="#8fa898" stroke-width="0.6"/>
<line x1="28.7" y1="183.8" x2="30.9" y2="183.8" stroke="#8fa898" stroke-width="0.6"/>
<line x1="658.5" y1="183.8" x2="660.7" y2="183.8" stroke="#8fa898" stroke-width="0.6"/>
<line x1="28.7" y1="187.2" x2="30.9" y2="187.2" stroke="#8fa898" stroke-width="0.6"/>
<line x1="658.5" y1="187.2" x2="660.7" y2="187.2" stroke="#8fa898" stroke-width="0.6"/>
<line x1="28.7" y1="190.7" x2="30.9" y2="190.7" stroke="#8fa898" stroke-width="0.6"/>
<line x1="658.5" y1="190.7" x2="660.7" y2="190.7" stroke="#8fa898" stroke-width="0.6"/>
<line x1="28.7" y1="194.1" x2="30.9" y2="194.1" stroke="#8fa898" stroke-width="0.6"/>
<line x1="658.5" y1="194.1" x2="660.7" y2="194.1" stroke="#8fa898" stroke-width="0.6"/>
<line x1="28.7" y1="197.5" x2="33.2" y2="197.5" stroke="#8fa898" stroke-width="0.6"/>
<line x1="656.2" y1="197.5" x2="660.7" y2="197.5" stroke="#8fa898" stroke-width="0.6"/>
<line x1="28.7" y1="201.0" x2="30.9" y2="201.0" stroke="#8fa898" stroke-width="0.6"/>
<line x1="658.5" y1="201.0" x2="660.7" y2="201.0" stroke="#8fa898" stroke-width="0.6"/>
<line x1="28.7" y1="204.4" x2="30.9" y2="204.4" stroke="#8fa898" stroke-width="0.6"/>
<line x1="658.5" y1="204.4" x2="660.7" y2="204.4" stroke="#8fa898" stroke-width="0.6"/>
<line x1="28.7" y1="207.8" x2="30.9" y2="207.8" stroke="#8fa898" stroke-width="0.6"/>
<line x1="658.5" y1="207.8" x2="660.7" y2="207.8" stroke="#8fa898" stroke-width="0.6"/>
<line x1="28.7" y1="211.3" x2="30.9" y2="211.3" stroke="#8fa898" stroke-width="0.6"/>
<line x1="658.5" y1="211.3" x2="660.7" y2="211.3" stroke="#8fa898" stroke-width="0.6"/>
<line x1="28.7" y1="214.7" x2="32.7" y2="214.7" stroke="#8fa898" stroke-width="0.6"/>
<line x1="656.7" y1="214.7" x2="660.7" y2="214.7" stroke="#8fa898" stroke-width="0.6"/>
<line x1="28.7" y1="218.1" x2="30.9" y2="218.1" stroke="#8fa898" stroke-width="0.6"/>
<line x1="658.5" y1="218.1" x2="660.7" y2="218.1" stroke="#8fa898" stroke-width="0.6"/>
<line x1="28.7" y1="221.6" x2="30.9" y2="221.6" stroke="#8fa898" stroke-width="0.6"/>
<line x1="658.5" y1="221.6" x2="660.7" y2="221.6" stroke="#8fa898" stroke-width="0.6"/>
<line x1="28.7" y1="225.0" x2="30.9" y2="225.0" stroke="#8fa898" stroke-width="0.6"/>
<line x1="658.5" y1="225.0" x2="660.7" y2="225.0" stroke="#8fa898" stroke-width="0.6"/>
<line x1="28.7" y1="228.4" x2="30.9" y2="228.4" stroke="#8fa898" stroke-width="0.6"/>
<line x1="658.5" y1="228.4" x2="660.7" y2="228.4" stroke="#8fa898" stroke-width="0.6"/>
<line x1="28.7" y1="231.9" x2="33.2" y2="231.9" stroke="#8fa898" stroke-width="0.6"/>
<line x1="656.2" y1="231.9" x2="660.7" y2="231.9" stroke="#8fa898" stroke-width="0.6"/>
<line x1="28.7" y1="235.3" x2="30.9" y2="235.3" stroke="#8fa898" stroke-width="0.6"/>
<line x1="658.5" y1="235.3" x2="660.7" y2="235.3" stroke="#8fa898" stroke-width="0.6"/>
<line x1="28.7" y1="238.7" x2="30.9" y2="238.7" stroke="#8fa898" stroke-width="0.6"/>
<line x1="658.5" y1="238.7" x2="660.7" y2="238.7" stroke="#8fa898" stroke-width="0.6"/>
<line x1="28.7" y1="242.2" x2="30.9" y2="242.2" stroke="#8fa898" stroke-width="0.6"/>
<line x1="658.5" y1="242.2" x2="660.7" y2="242.2" stroke="#8fa898" stroke-width="0.6"/>
<line x1="28.7" y1="245.6" x2="30.9" y2="245.6" stroke="#8fa898" stroke-width="0.6"/>
<line x1="658.5" y1="245.6" x2="660.7" y2="245.6" stroke="#8fa898" stroke-width="0.6"/>
<line x1="28.7" y1="249.0" x2="32.7" y2="249.0" stroke="#8fa898" stroke-width="0.6"/>
<line x1="656.7" y1="249.0" x2="660.7" y2="249.0" stroke="#8fa898" stroke-width="0.6"/>
<line x1="28.7" y1="252.5" x2="30.9" y2="252.5" stroke="#8fa898" stroke-width="0.6"/>
<line x1="658.5" y1="252.5" x2="660.7" y2="252.5" stroke="#8fa898" stroke-width="0.6"/>
<line x1="28.7" y1="255.9" x2="30.9" y2="255.9" stroke="#8fa898" stroke-width="0.6"/>
<line x1="658.5" y1="255.9" x2="660.7" y2="255.9" stroke="#8fa898" stroke-width="0.6"/>
<line x1="28.7" y1="259.3" x2="30.9" y2="259.3" stroke="#8fa898" stroke-width="0.6"/>
<line x1="658.5" y1="259.3" x2="660.7" y2="259.3" stroke="#8fa898" stroke-width="0.6"/>
<line x1="28.7" y1="262.8" x2="30.9" y2="262.8" stroke="#8fa898" stroke-width="0.6"/>
<line x1="658.5" y1="262.8" x2="660.7" y2="262.8" stroke="#8fa898" stroke-width="0.6"/>
<line x1="28.7" y1="266.2" x2="33.2" y2="266.2" stroke="#8fa898" stroke-width="0.6"/>
<line x1="656.2" y1="266.2" x2="660.7" y2="266.2" stroke="#8fa898" stroke-width="0.6"/>
<line x1="28.7" y1="269.6" x2="30.9" y2="269.6" stroke="#8fa898" stroke-width="0.6"/>
<line x1="658.5" y1="269.6" x2="660.7" y2="269.6" stroke="#8fa898" stroke-width="0.6"/>
<line x1="28.7" y1="273.1" x2="30.9" y2="273.1" stroke="#8fa898" stroke-width="0.6"/>
<line x1="658.5" y1="273.1" x2="660.7" y2="273.1" stroke="#8fa898" stroke-width="0.6"/>
<line x1="28.7" y1="276.5" x2="30.9" y2="276.5" stroke="#8fa898" stroke-width="0.6"/>
<line x1="658.5" y1="276.5" x2="660.7" y2="276.5" stroke="#8fa898" stroke-width="0.6"/>
<line x1="28.7" y1="279.9" x2="30.9" y2="279.9" stroke="#8fa898" stroke-width="0.6"/>
<line x1="658.5" y1="279.9" x2="660.7" y2="279.9" stroke="#8fa898" stroke-width="0.6"/>
<line x1="28.7" y1="283.4" x2="32.7" y2="283.4" stroke="#8fa898" stroke-width="0.6"/>
<line x1="656.7" y1="283.4" x2="660.7" y2="283.4" stroke="#8fa898" stroke-width="0.6"/>
<line x1="28.7" y1="286.8" x2="30.9" y2="286.8" stroke="#8fa898" stroke-width="0.6"/>
<line x1="658.5" y1="286.8" x2="660.7" y2="286.8" stroke="#8fa898" stroke-width="0.6"/>
<line x1="28.7" y1="290.2" x2="30.9" y2="290.2" stroke="#8fa898" stroke-width="0.6"/>
<line x1="658.5" y1="290.2" x2="660.7" y2="290.2" stroke="#8fa898" stroke-width="0.6"/>
<line x1="28.7" y1="293.6" x2="30.9" y2="293.6" stroke="#8fa898" stroke-width="0.6"/>
<line x1="658.5" y1="293.6" x2="660.7" y2="293.6" stroke="#8fa898" stroke-width="0.6"/>
<line x1="28.7" y1="297.1" x2="30.9" y2="297.1" stroke="#8fa898" stroke-width="0.6"/>
<line x1="658.5" y1="297.1" x2="660.7" y2="297.1" stroke="#8fa898" stroke-width="0.6"/>
<line x1="28.7" y1="300.5" x2="33.2" y2="300.5" stroke="#8fa898" stroke-width="0.6"/>
<line x1="656.2" y1="300.5" x2="660.7" y2="300.5" stroke="#8fa898" stroke-width="0.6"/>
<line x1="28.7" y1="303.9" x2="30.9" y2="303.9" stroke="#8fa898" stroke-width="0.6"/>
<line x1="658.5" y1="303.9" x2="660.7" y2="303.9" stroke="#8fa898" stroke-width="0.6"/>
<line x1="28.7" y1="307.4" x2="30.9" y2="307.4" stroke="#8fa898" stroke-width="0.6"/>
<line x1="658.5" y1="307.4" x2="660.7" y2="307.4" stroke="#8fa898" stroke-width="0.6"/>
<line x1="28.7" y1="310.8" x2="30.9" y2="310.8" stroke="#8fa898" stroke-width="0.6"/>
<line x1="658.5" y1="310.8" x2="660.7" y2="310.8" stroke="#8fa898" stroke-width="0.6"/>
<line x1="28.7" y1="314.2" x2="30.9" y2="314.2" stroke="#8fa898" stroke-width="0.6"/>
<line x1="658.5" y1="314.2" x2="660.7" y2="314.2" stroke="#8fa898" stroke-width="0.6"/>
<line x1="28.7" y1="317.7" x2="32.7" y2="317.7" stroke="#8fa898" stroke-width="0.6"/>
<line x1="656.7" y1="317.7" x2="660.7" y2="317.7" stroke="#8fa898" stroke-width="0.6"/>
<line x1="28.7" y1="321.1" x2="30.9" y2="321.1" stroke="#8fa898" stroke-width="0.6"/>
<line x1="658.5" y1="321.1" x2="660.7" y2="321.1" stroke="#8fa898" stroke-width="0.6"/>
<line x1="28.7" y1="324.5" x2="30.9" y2="324.5" stroke="#8fa898" stroke-width="0.6"/>
<line x1="658.5" y1="324.5" x2="660.7" y2="324.5" stroke="#8fa898" stroke-width="0.6"/>
<line x1="28.7" y1="328.0" x2="30.9" y2="328.0" stroke="#8fa898" stroke-width="0.6"/>
<line x1="658.5" y1="328.0" x2="660.7" y2="328.0" stroke="#8fa898" stroke-width="0.6"/>
<line x1="28.7" y1="331.4" x2="30.9" y2="331.4" stroke="#8fa898" stroke-width="0.6"/>
<line x1="658.5" y1="331.4" x2="660.7" y2="331.4" stroke="#8fa898" stroke-width="0.6"/>
<line x1="28.7" y1="334.8" x2="33.2" y2="334.8" stroke="#8fa898" stroke-width="0.6"/>
<line x1="656.2" y1="334.8" x2="660.7" y2="334.8" stroke="#8fa898" stroke-width="0.6"/>
<line x1="28.7" y1="338.3" x2="30.9" y2="338.3" stroke="#8fa898" stroke-width="0.6"/>
<line x1="658.5" y1="338.3" x2="660.7" y2="338.3" stroke="#8fa898" stroke-width="0.6"/>
<line x1="28.7" y1="341.7" x2="30.9" y2="341.7" stroke="#8fa898" stroke-width="0.6"/>
<line x1="658.5" y1="341.7" x2="660.7" y2="341.7" stroke="#8fa898" stroke-width="0.6"/>
<line x1="28.7" y1="345.1" x2="30.9" y2="345.1" stroke="#8fa898" stroke-width="0.6"/>
<line x1="658.5" y1="345.1" x2="660.7" y2="345.1" stroke="#8fa898" stroke-width="0.6"/>
<line x1="28.7" y1="348.6" x2="30.9" y2="348.6" stroke="#8fa898" stroke-width="0.6"/>
<line x1="658.5" y1="348.6" x2="660.7" y2="348.6" stroke="#8fa898" stroke-width="0.6"/>
<line x1="28.7" y1="352.0" x2="32.7" y2="352.0" stroke="#8fa898" stroke-width="0.6"/>
<line x1="656.7" y1="352.0" x2="660.7" y2="352.0" stroke="#8fa898" stroke-width="0.6"/>
<line x1="28.7" y1="355.4" x2="30.9" y2="355.4" stroke="#8fa898" stroke-width="0.6"/>
<line x1="658.5" y1="355.4" x2="660.7" y2="355.4" stroke="#8fa898" stroke-width="0.6"/>
<line x1="28.7" y1="358.9" x2="30.9" y2="358.9" stroke="#8fa898" stroke-width="0.6"/>
<line x1="658.5" y1="358.9" x2="660.7" y2="358.9" stroke="#8fa898" stroke-width="0.6"/>
<line x1="28.7" y1="362.3" x2="30.9" y2="362.3" stroke="#8fa898" stroke-width="0.6"/>
<line x1="658.5" y1="362.3" x2="660.7" y2="362.3" stroke="#8fa898" stroke-width="0.6"/>
<line x1="28.7" y1="365.7" x2="30.9" y2="365.7" stroke="#8fa898" stroke-width="0.6"/>
<line x1="658.5" y1="365.7" x2="660.7" y2="365.7" stroke="#8fa898" stroke-width="0.6"/>
<line x1="28.7" y1="369.2" x2="33.2" y2="369.2" stroke="#8fa898" stroke-width="0.6"/>
<line x1="656.2" y1="369.2" x2="660.7" y2="369.2" stroke="#8fa898" stroke-width="0.6"/>
<line x1="28.7" y1="372.6" x2="30.9" y2="372.6" stroke="#8fa898" stroke-width="0.6"/>
<line x1="658.5" y1="372.6" x2="660.7" y2="372.6" stroke="#8fa898" stroke-width="0.6"/>
<line x1="28.7" y1="376.0" x2="30.9" y2="376.0" stroke="#8fa898" stroke-width="0.6"/>
<line x1="658.5" y1="376.0" x2="660.7" y2="376.0" stroke="#8fa898" stroke-width="0.6"/>
<line x1="28.7" y1="379.5" x2="30.9" y2="379.5" stroke="#8fa898" stroke-width="0.6"/>
<line x1="658.5" y1="379.5" x2="660.7" y2="379.5" stroke="#8fa898" stroke-width="0.6"/>
<line x1="28.7" y1="382.9" x2="30.9" y2="382.9" stroke="#8fa898" stroke-width="0.6"/>
<line x1="658.5" y1="382.9" x2="660.7" y2="382.9" stroke="#8fa898" stroke-width="0.6"/>
<line x1="28.7" y1="386.3" x2="32.7" y2="386.3" stroke="#8fa898" stroke-width="0.6"/>
<line x1="656.7" y1="386.3" x2="660.7" y2="386.3" stroke="#8fa898" stroke-width="0.6"/>
<line x1="28.7" y1="389.8" x2="30.9" y2="389.8" stroke="#8fa898" stroke-width="0.6"/>
<line x1="658.5" y1="389.8" x2="660.7" y2="389.8" stroke="#8fa898" stroke-width="0.6"/>
<line x1="28.7" y1="393.2" x2="30.9" y2="393.2" stroke="#8fa898" stroke-width="0.6"/>
<line x1="658.5" y1="393.2" x2="660.7" y2="393.2" stroke="#8fa898" stroke-width="0.6"/>
<line x1="28.7" y1="396.6" x2="30.9" y2="396.6" stroke="#8fa898" stroke-width="0.6"/>
<line x1="658.5" y1="396.6" x2="660.7" y2="396.6" stroke="#8fa898" stroke-width="0.6"/>
<line x1="28.7" y1="400.1" x2="30.9" y2="400.1" stroke="#8fa898" stroke-width="0.6"/>
<line x1="658.5" y1="400.1" x2="660.7" y2="400.1" stroke="#8fa898" stroke-width="0.6"/>
<line x1="28.7" y1="403.5" x2="33.2" y2="403.5" stroke="#8fa898" stroke-width="0.6"/>
<line x1="656.2" y1="403.5" x2="660.7" y2="403.5" stroke="#8fa898" stroke-width="0.6"/>
<line x1="28.7" y1="406.9" x2="30.9" y2="406.9" stroke="#8fa898" stroke-width="0.6"/>
<line x1="658.5" y1="406.9" x2="660.7" y2="406.9" stroke="#8fa898" stroke-width="0.6"/>
<line x1="28.7" y1="410.4" x2="30.9" y2="410.4" stroke="#8fa898" stroke-width="0.6"/>
<line x1="658.5" y1="410.4" x2="660.7" y2="410.4" stroke="#8fa898" stroke-width="0.6"/>
<line x1="28.7" y1="413.8" x2="30.9" y2="413.8" stroke="#8fa898" stroke-width="0.6"/>
<line x1="658.5" y1="413.8" x2="660.7" y2="413.8" stroke="#8fa898" stroke-width="0.6"/>
<line x1="28.7" y1="417.2" x2="30.9" y2="417.2" stroke="#8fa898" stroke-width="0.6"/>
<line x1="658.5" y1="417.2" x2="660.7" y2="417.2" stroke="#8fa898" stroke-width="0.6"/>
<line x1="28.7" y1="420.7" x2="32.7" y2="420.7" stroke="#8fa898" stroke-width="0.6"/>
<line x1="656.7" y1="420.7" x2="660.7" y2="420.7" stroke="#8fa898" stroke-width="0.6"/>
<line x1="28.7" y1="424.1" x2="30.9" y2="424.1" stroke="#8fa898" stroke-width="0.6"/>
<line x1="658.5" y1="424.1" x2="660.7" y2="424.1" stroke="#8fa898" stroke-width="0.6"/>
<line x1="28.7" y1="427.5" x2="30.9" y2="427.5" stroke="#8fa898" stroke-width="0.6"/>
<line x1="658.5" y1="427.5" x2="660.7" y2="427.5" stroke="#8fa898" stroke-width="0.6"/>
<line x1="28.7" y1="431.0" x2="30.9" y2="431.0" stroke="#8fa898" stroke-width="0.6"/>
<line x1="658.5" y1="431.0" x2="660.7" y2="431.0" stroke="#8fa898" stroke-width="0.6"/>
<line x1="28.7" y1="434.4" x2="30.9" y2="434.4" stroke="#8fa898" stroke-width="0.6"/>
<line x1="658.5" y1="434.4" x2="660.7" y2="434.4" stroke="#8fa898" stroke-width="0.6"/>
<line x1="28.7" y1="437.8" x2="33.2" y2="437.8" stroke="#8fa898" stroke-width="0.6"/>
<line x1="656.2" y1="437.8" x2="660.7" y2="437.8" stroke="#8fa898" stroke-width="0.6"/>
<line x1="28.7" y1="441.3" x2="30.9" y2="441.3" stroke="#8fa898" stroke-width="0.6"/>
<line x1="658.5" y1="441.3" x2="660.7" y2="441.3" stroke="#8fa898" stroke-width="0.6"/>
<line x1="28.7" y1="444.7" x2="30.9" y2="444.7" stroke="#8fa898" stroke-width="0.6"/>
<line x1="658.5" y1="444.7" x2="660.7" y2="444.7" stroke="#8fa898" stroke-width="0.6"/>
<line x1="28.7" y1="448.1" x2="30.9" y2="448.1" stroke="#8fa898" stroke-width="0.6"/>
<line x1="658.5" y1="448.1" x2="660.7" y2="448.1" stroke="#8fa898" stroke-width="0.6"/>
<line x1="28.7" y1="451.6" x2="30.9" y2="451.6" stroke="#8fa898" stroke-width="0.6"/>
<line x1="658.5" y1="451.6" x2="660.7" y2="451.6" stroke="#8fa898" stroke-width="0.6"/>
<line x1="28.7" y1="455.0" x2="32.7" y2="455.0" stroke="#8fa898" stroke-width="0.6"/>
<line x1="656.7" y1="455.0" x2="660.7" y2="455.0" stroke="#8fa898" stroke-width="0.6"/>
<path d="M340 111.7 L348 111.7 L344 119.5 Z" fill="#ffffff"/>
<path d="M29.2 279 L37 283.2 L29.2 287.5 Z" fill="#2ab0e0" stroke="#e8f8ff" stroke-width="0.8"/>
<path d="M660.2 279.6 L652 283 L660.2 287.3 Z" fill="#f5c400"/>
<line x1="660" y1="283.2" x2="673" y2="283.2" stroke="#e0b000" stroke-width="1"/>
<rect x="671.6" y="150" width="1.2" height="1.2" fill="#d4b400" opacity="0.8"/>
<rect x="671.6" y="153" width="1.2" height="1.2" fill="#1bbde6" opacity="0.8"/>
<rect x="671.6" y="156" width="1.2" height="1.2" fill="#d4b400" opacity="0.8"/>
<rect x="671.6" y="159" width="1.2" height="1.2" fill="#1bbde6" opacity="0.8"/>
<rect x="671.6" y="162" width="1.2" height="1.2" fill="#d4b400" opacity="0.8"/>
<rect x="671.6" y="165" width="1.2" height="1.2" fill="#1bbde6" opacity="0.8"/>
<rect x="671.6" y="168" width="1.2" height="1.2" fill="#d4b400" opacity="0.8"/>
<rect x="671.6" y="171" width="1.2" height="1.2" fill="#1bbde6" opacity="0.8"/>
<rect x="671.6" y="174" width="1.2" height="1.2" fill="#d4b400" opacity="0.8"/>
<rect x="671.6" y="177" width="1.2" height="1.2" fill="#1bbde6" opacity="0.8"/>
<rect x="671.6" y="180" width="1.2" height="1.2" fill="#d4b400" opacity="0.8"/>
<rect x="671.6" y="183" width="1.2" height="1.2" fill="#1bbde6" opacity="0.8"/>
<rect x="671.6" y="186" width="1.2" height="1.2" fill="#d4b400" opacity="0.8"/>
<rect x="671.6" y="189" width="1.2" height="1.2" fill="#1bbde6" opacity="0.8"/>
<rect x="671.6" y="192" width="1.2" height="1.2" fill="#d4b400" opacity="0.8"/>
<rect x="671.6" y="195" width="1.2" height="1.2" fill="#1bbde6" opacity="0.8"/>
<rect x="671.6" y="198" width="1.2" height="1.2" fill="#d4b400" opacity="0.8"/>
<rect x="671.6" y="201" width="1.2" height="1.2" fill="#1bbde6" opacity="0.8"/>
<rect x="671.6" y="204" width="1.2" height="1.2" fill="#d4b400" opacity="0.8"/>
<rect x="671.6" y="207" width="1.2" height="1.2" fill="#1bbde6" opacity="0.8"/>
<rect x="671.6" y="210" width="1.2" height="1.2" fill="#d4b400" opacity="0.8"/>
<rect x="671.6" y="213" width="1.2" height="1.2" fill="#1bbde6" opacity="0.8"/>
<rect x="671.6" y="216" width="1.2" height="1.2" fill="#d4b400" opacity="0.8"/>
<rect x="671.6" y="219" width="1.2" height="1.2" fill="#1bbde6" opacity="0.8"/>
<rect x="671.6" y="222" width="1.2" height="1.2" fill="#d4b400" opacity="0.8"/>
<rect x="671.6" y="225" width="1.2" height="1.2" fill="#1bbde6" opacity="0.8"/>
<rect x="671.6" y="228" width="1.2" height="1.2" fill="#d4b400" opacity="0.8"/>
<rect x="671.6" y="231" width="1.2" height="1.2" fill="#1bbde6" opacity="0.8"/>
<rect x="671.6" y="234" width="1.2" height="1.2" fill="#d4b400" opacity="0.8"/>
<rect x="671.6" y="237" width="1.2" height="1.2" fill="#1bbde6" opacity="0.8"/>
<rect x="671.6" y="240" width="1.2" height="1.2" fill="#d4b400" opacity="0.8"/>
<rect x="671.6" y="243" width="1.2" height="1.2" fill="#1bbde6" opacity="0.8"/>
<rect x="671.6" y="246" width="1.2" height="1.2" fill="#d4b400" opacity="0.8"/>
<rect x="671.6" y="249" width="1.2" height="1.2" fill="#1bbde6" opacity="0.8"/>
<rect x="671.6" y="252" width="1.2" height="1.2" fill="#d4b400" opacity="0.8"/>
<rect x="671.6" y="255" width="1.2" height="1.2" fill="#1bbde6" opacity="0.8"/>
<rect x="671.6" y="258" width="1.2" height="1.2" fill="#d4b400" opacity="0.8"/>
<rect x="671.6" y="261" width="1.2" height="1.2" fill="#1bbde6" opacity="0.8"/>
<rect x="671.6" y="264" width="1.2" height="1.2" fill="#d4b400" opacity="0.8"/>
<rect x="671.6" y="267" width="1.2" height="1.2" fill="#1bbde6" opacity="0.8"/>
<rect x="671.6" y="270" width="1.2" height="1.2" fill="#d4b400" opacity="0.8"/>
<rect x="671.6" y="273" width="1.2" height="1.2" fill="#1bbde6" opacity="0.8"/>
<rect x="671.6" y="276" width="1.2" height="1.2" fill="#d4b400" opacity="0.8"/>
<rect x="671.6" y="279" width="1.2" height="1.2" fill="#1bbde6" opacity="0.8"/>
<rect x="671.6" y="282" width="1.2" height="1.2" fill="#d4b400" opacity="0.8"/>
<rect x="671.6" y="285" width="1.2" height="1.2" fill="#1bbde6" opacity="0.8"/>
<rect x="671.6" y="288" width="1.2" height="1.2" fill="#d4b400" opacity="0.8"/>
<text transform="translate(2.00,108.20) scale(0.915,1)" font-size="8.14" fill="#22aee8" font-weight="normal" text-anchor="start" >C2 V</text>
<path d="M32.3 102 L37 105.3 L32.3 108.6" fill="none" stroke="#2f7ff0" stroke-width="1.6"/>
<rect x="42.90" y="99.30" width="51.40" height="11.40" fill="#000" stroke="#ee1010" stroke-width="1.9" />
<text transform="translate(68.50,108.50) scale(0.915,1)" font-size="8.57" fill="#fff" font-weight="bold" text-anchor="middle" >Stop</text>
<rect x="95.80" y="98.80" width="14.00" height="12.00" fill="#000" stroke="#d8b020" stroke-width="0.9" />
<text transform="translate(102.80,108.40) scale(0.915,1)" font-size="8.46" fill="#f0c000" font-weight="bold" text-anchor="middle" >C1</text>
<rect x="111.00" y="98.80" width="14.00" height="12.00" fill="#000" stroke="#5a5a5a" stroke-width="0.9" />
<text transform="translate(118.00,108.40) scale(0.915,1)" font-size="8.46" fill="#22b0ea" font-weight="bold" text-anchor="middle" >C2</text>
<text transform="translate(127.00,108.60) scale(0.915,1)" font-size="7.92" fill="#ffffff" font-weight="normal" text-anchor="start" >8192 samples at 800 kHz | 2025-12-21 11:24:29.913</text>
<line x1="582.1" y1="106.1" x2="584.8" y2="108.8" stroke="#b8b8b8" stroke-width="1.2"/><circle cx="579.5" cy="103.5" r="3.6" fill="#2c62b0" stroke="#b0b8c4" stroke-width="0.9"/><circle cx="578.5" cy="102.5" r="1.3" fill="#8fb4e8" opacity="0.8"/>
<line x1="638.1" y1="106.1" x2="640.8" y2="108.8" stroke="#b8b8b8" stroke-width="1.2"/><circle cx="635.5" cy="103.5" r="3.6" fill="#2c62b0" stroke="#b0b8c4" stroke-width="0.9"/><circle cx="634.5" cy="102.5" r="1.3" fill="#8fb4e8" opacity="0.8"/>
<rect x="589" y="106" width="8" height="1.6" fill="#b0b0b0"/>
<rect x="603" y="106" width="8" height="1.6" fill="#b0b0b0"/>
<rect x="616" y="106" width="8" height="1.6" fill="#b0b0b0"/>
<path d="M590.5 100.5 L595 104.5" stroke="#4a90e0" stroke-width="1.3"/>
<path d="M604 100 V104.5 M604 102.2 H611" stroke="#4a90e0" stroke-width="1.2"/>
<path d="M617 100 V104.5 M617 100.8 H625 M617 103.5 H622" stroke="#4a90e0" stroke-width="1.1"/>
<rect x="646.80" y="99.20" width="12.40" height="11.00" fill="#d8d8d8" />
<path d="M655.95 104.17 L656.97 104.23 L656.97 105.17 L655.95 105.23 L655.46 106.42 L656.14 107.18 L655.48 107.84 L654.72 107.16 L653.53 107.65 L653.47 108.67 L652.53 108.67 L652.47 107.65 L651.28 107.16 L650.52 107.84 L649.86 107.18 L650.54 106.42 L650.05 105.23 L649.03 105.17 L649.03 104.23 L650.05 104.17 L650.54 102.98 L649.86 102.22 L650.52 101.56 L651.28 102.24 L652.47 101.75 L652.53 100.73 L653.47 100.73 L653.53 101.75 L654.72 102.24 L655.48 101.56 L656.14 102.22 L655.46 102.98 Z M654.30 104.70 A1.3 1.3 0 1 0 651.70 104.70 A1.3 1.3 0 1 0 654.30 104.70 Z" fill="#e6e6e6" stroke="#686868" stroke-width="0.6" fill-rule="evenodd"/>
<rect x="661.00" y="99.20" width="12.00" height="11.50" fill="#e8e8e8" />
<text transform="translate(667.50,108.50) scale(0.915,1)" font-size="8.68" fill="#1a2540" font-weight="bold" text-anchor="middle" >Y</text>
<text transform="translate(3.00,119.00) scale(0.915,1)" font-size="8.14" fill="#22aee8" font-weight="normal" text-anchor="start" >2.5</text>
<text transform="translate(3.00,152.57) scale(0.915,1)" font-size="8.14" fill="#22aee8" font-weight="normal" text-anchor="start" >2</text>
<text transform="translate(3.00,186.14) scale(0.915,1)" font-size="8.14" fill="#22aee8" font-weight="normal" text-anchor="start" >1.5</text>
<text transform="translate(3.00,219.71) scale(0.915,1)" font-size="8.14" fill="#22aee8" font-weight="normal" text-anchor="start" >1</text>
<text transform="translate(3.00,253.28) scale(0.915,1)" font-size="8.14" fill="#22aee8" font-weight="normal" text-anchor="start" >0.5</text>
<text transform="translate(3.00,286.85) scale(0.915,1)" font-size="8.14" fill="#22aee8" font-weight="normal" text-anchor="start" >0</text>
<text transform="translate(2.80,320.42) scale(0.915,1)" font-size="8.14" fill="#22aee8" font-weight="normal" text-anchor="start" >-0.5</text>
<text transform="translate(2.80,353.99) scale(0.915,1)" font-size="8.14" fill="#22aee8" font-weight="normal" text-anchor="start" >-1</text>
<text transform="translate(2.80,387.56) scale(0.915,1)" font-size="8.14" fill="#22aee8" font-weight="normal" text-anchor="start" >-1.5</text>
<text transform="translate(2.80,421.13) scale(0.915,1)" font-size="8.14" fill="#22aee8" font-weight="normal" text-anchor="start" >-2</text>
<text transform="translate(2.80,454.70) scale(0.915,1)" font-size="8.14" fill="#22aee8" font-weight="normal" text-anchor="start" >-2.5</text>
<text transform="translate(21.80,466.00) scale(0.915,1)" font-size="7.81" fill="#e0e0e0" font-weight="normal" text-anchor="start" >-500 us</text>
<text transform="translate(84.23,466.00) scale(0.915,1)" font-size="7.81" fill="#e0e0e0" font-weight="normal" text-anchor="start" >-400 us</text>
<text transform="translate(146.66,466.00) scale(0.915,1)" font-size="7.81" fill="#e0e0e0" font-weight="normal" text-anchor="start" >-300 us</text>
<text transform="translate(209.09,466.00) scale(0.915,1)" font-size="7.81" fill="#e0e0e0" font-weight="normal" text-anchor="start" >-200 us</text>
<text transform="translate(271.52,466.00) scale(0.915,1)" font-size="7.81" fill="#e0e0e0" font-weight="normal" text-anchor="start" >-100 us</text>
<text transform="translate(333.95,466.00) scale(0.915,1)" font-size="7.81" fill="#e0e0e0" font-weight="normal" text-anchor="start" >0 us</text>
<text transform="translate(396.38,466.00) scale(0.915,1)" font-size="7.81" fill="#e0e0e0" font-weight="normal" text-anchor="start" >100 us</text>
<text transform="translate(458.81,466.00) scale(0.915,1)" font-size="7.81" fill="#e0e0e0" font-weight="normal" text-anchor="start" >200 us</text>
<text transform="translate(521.24,466.00) scale(0.915,1)" font-size="7.81" fill="#e0e0e0" font-weight="normal" text-anchor="start" >300 us</text>
<text transform="translate(583.67,466.00) scale(0.915,1)" font-size="7.81" fill="#e0e0e0" font-weight="normal" text-anchor="start" >400 us</text>
<text transform="translate(646.10,466.00) scale(0.915,1)" font-size="7.81" fill="#e0e0e0" font-weight="normal" text-anchor="start" >500 us</text>
<rect x="2.70" y="456.00" width="18.30" height="12.00" fill="#f0f0f0" stroke="#a0a0a0" stroke-width="0.6" />
<text transform="translate(5.60,465.60) scale(0.915,1)" font-size="8.46" fill="#111" font-weight="bold" text-anchor="start" >X</text>
<line x1="14.5" y1="457" x2="14.5" y2="467" stroke="#b8b8b8" stroke-width="0.6"/>
<path d="M15.6 460.5 L19.4 460.5 L17.5 462.7 Z" fill="#111"/>
<rect x="674" y="97.3" width="126" height="371.7" fill="#f0f0f0" />
<path d="M676.5 105 H682" stroke="#5ab85a" stroke-width="2"/><path d="M681.5 102.5 L685 105 L681.5 107.5 Z" fill="#5ab85a"/>
<rect x="784.6" y="110" width="13" height="358" fill="#f0f0f0" />
<path d="M784.6 110 V468" stroke="#e2e2e2" stroke-width="0.8"/>
<path d="M787.5 118 L789.8 115.6 L792.1 118" fill="none" stroke="#a0a0a0" stroke-width="0.8"/>
<path d="M787.5 460.5 L789.8 462.9 L792.1 460.5" fill="none" stroke="#a0a0a0" stroke-width="0.8"/>
<rect x="676" y="111" width="105.75" height="60.4" fill="#ffffff" />
<rect x="678" y="113" width="101.75" height="56.4" fill="#ececec" />
<rect x="678.3" y="115.3" width="8" height="8" fill="#ffffff" stroke="#333" stroke-width="0.8" />
<path d="M679.8 119.3 L681.5999999999999 121.5 L685.0999999999999 116.5" fill="none" stroke="#222" stroke-width="0.9"/>
<text transform="translate(690.00,122.00) scale(0.915,1)" font-size="7.81" fill="#000" font-weight="normal" text-anchor="start" >Time</text>
<rect x="765" y="114.4" width="13.5" height="9.5" fill="#dcdcdc" stroke="#c4c4c4" stroke-width="0.5" />
<path d="M774.31 118.69 L775.23 118.74 L775.23 119.56 L774.31 119.61 L773.88 120.64 L774.50 121.32 L773.92 121.90 L773.24 121.28 L772.21 121.71 L772.16 122.63 L771.34 122.63 L771.29 121.71 L770.26 121.28 L769.58 121.90 L769.00 121.32 L769.62 120.64 L769.19 119.61 L768.27 119.56 L768.27 118.74 L769.19 118.69 L769.62 117.66 L769.00 116.98 L769.58 116.40 L770.26 117.02 L771.29 116.59 L771.34 115.67 L772.16 115.67 L772.21 116.59 L773.24 117.02 L773.92 116.40 L774.50 116.98 L773.88 117.66 Z M773.05 119.15 A1.3 1.3 0 1 0 770.45 119.15 A1.3 1.3 0 1 0 773.05 119.15 Z" fill="#e8e8e8" stroke="#7a7a7a" stroke-width="0.6" fill-rule="evenodd"/>
<text transform="translate(680.70,135.00) scale(0.915,1)" font-size="7.81" fill="#000" font-weight="normal" text-anchor="start" >Position:</text>
<rect x="719" y="125.4" width="59.5" height="13.1" fill="#ffffff" stroke="#a8a8a8" stroke-width="0.7" />
<text transform="translate(722.00,135.50) scale(0.915,1)" font-size="7.81" fill="#000" font-weight="normal" text-anchor="start" >0 s</text>
<path d="M769.7 131.35000000000002 L772.5 133.95000000000002 L775.3 131.35000000000002" fill="none" stroke="#444" stroke-width="0.8"/>
<text transform="translate(680.70,149.00) scale(0.915,1)" font-size="7.81" fill="#000" font-weight="normal" text-anchor="start" >Base:</text>
<rect x="719" y="139.5" width="59.5" height="13.1" fill="#ffffff" stroke="#a8a8a8" stroke-width="0.7" />
<text transform="translate(722.00,149.60) scale(0.915,1)" font-size="7.81" fill="#000" font-weight="normal" text-anchor="start" >100 us/div</text>
<path d="M769.7 145.45000000000002 L772.5 148.05 L775.3 145.45000000000002" fill="none" stroke="#444" stroke-width="0.8"/>
<rect x="679" y="153.3" width="100" height="14" fill="#c4def2" />
<path d="M729.5 155.5 V163.5" stroke="#62bc4a" stroke-width="1.5"/><path d="M726.5 161.3 L729.5 165 L732.5 161.3" fill="none" stroke="#62bc4a" stroke-width="1.2"/>
<path d="M686.15 179.87 L687.17 179.93 L687.17 180.87 L686.15 180.93 L685.66 182.12 L686.34 182.88 L685.68 183.54 L684.92 182.86 L683.73 183.35 L683.67 184.37 L682.73 184.37 L682.67 183.35 L681.48 182.86 L680.72 183.54 L680.06 182.88 L680.74 182.12 L680.25 180.93 L679.23 180.87 L679.23 179.93 L680.25 179.87 L680.74 178.68 L680.06 177.92 L680.72 177.26 L681.48 177.94 L682.67 177.45 L682.73 176.43 L683.67 176.43 L683.73 177.45 L684.92 177.94 L685.68 177.26 L686.34 177.92 L685.66 178.68 Z M684.50 180.40 A1.3 1.3 0 1 0 681.90 180.40 A1.3 1.3 0 1 0 684.50 180.40 Z" fill="#e4e4e4" stroke="#707070" stroke-width="0.6" fill-rule="evenodd"/>
<text transform="translate(691.00,183.60) scale(0.915,1)" font-size="7.81" fill="#000" font-weight="normal" text-anchor="start" >Options</text>
<path d="M772.3 179.2 L777.1 179.2 L774.7 182 Z" fill="#111"/>
<rect x="676.6" y="189.4" width="104.4" height="14" fill="#e1e1e1" stroke="#cfcfcf" stroke-width="0.6" />
<path d="M683.5 191 V202 M678.5 196.5 H688.5" stroke="#4cc24c" stroke-width="2.6"/>
<text transform="translate(691.00,200.00) scale(0.915,1)" font-size="7.81" fill="#000" font-weight="normal" text-anchor="start" >Add Channel</text>
<path d="M772.3 195.3 L777.1 195.3 L774.7 198.1 Z" fill="#111"/>
<rect x="677.5" y="206.0" width="103" height="42.60000000000001" fill="#ececec" stroke="#fcd000" stroke-width="2.8" />
<rect x="678.8" y="209.7" width="8" height="8" fill="#ffffff" stroke="#333" stroke-width="0.8" />
<path d="M680.3 213.7 L682.0999999999999 215.89999999999998 L685.5999999999999 210.89999999999998" fill="none" stroke="#222" stroke-width="0.9"/>
<text transform="translate(690.00,216.50) scale(0.915,1)" font-size="7.81" fill="#000" font-weight="normal" text-anchor="start" >Channel 1 (1±)</text>
<rect x="765" y="208.4" width="13.5" height="9.5" fill="#dcdcdc" stroke="#c4c4c4" stroke-width="0.5" />
<path d="M774.31 212.69 L775.23 212.74 L775.23 213.56 L774.31 213.61 L773.88 214.64 L774.50 215.32 L773.92 215.90 L773.24 215.28 L772.21 215.71 L772.16 216.63 L771.34 216.63 L771.29 215.71 L770.26 215.28 L769.58 215.90 L769.00 215.32 L769.62 214.64 L769.19 213.61 L768.27 213.56 L768.27 212.74 L769.19 212.69 L769.62 211.66 L769.00 210.98 L769.58 210.40 L770.26 211.02 L771.29 210.59 L771.34 209.67 L772.16 209.67 L772.21 210.59 L773.24 211.02 L773.92 210.40 L774.50 210.98 L773.88 211.66 Z M773.05 213.15 A1.3 1.3 0 1 0 770.45 213.15 A1.3 1.3 0 1 0 773.05 213.15 Z" fill="#e8e8e8" stroke="#7a7a7a" stroke-width="0.6" fill-rule="evenodd"/>
<text transform="translate(681.00,230.00) scale(0.915,1)" font-size="7.81" fill="#000" font-weight="normal" text-anchor="start" >Offset:</text>
<rect x="719" y="221.0" width="59.5" height="12.2" fill="#ffffff" stroke="#a8a8a8" stroke-width="0.7" />
<text transform="translate(722.00,230.20) scale(0.915,1)" font-size="7.81" fill="#000" font-weight="normal" text-anchor="start" >0 V</text>
<path d="M769.7 226.5 L772.5 229.1 L775.3 226.5" fill="none" stroke="#444" stroke-width="0.8"/>
<text transform="translate(681.00,243.00) scale(0.915,1)" font-size="7.81" fill="#000" font-weight="normal" text-anchor="start" >Range:</text>
<rect x="719" y="235.0" width="59.5" height="12.2" fill="#ffffff" stroke="#a8a8a8" stroke-width="0.7" />
<text transform="translate(722.00,244.20) scale(0.915,1)" font-size="7.81" fill="#000" font-weight="normal" text-anchor="start" >500 mV/div</text>
<path d="M769.7 240.5 L772.5 243.1 L775.3 240.5" fill="none" stroke="#444" stroke-width="0.8"/>
<rect x="677.5" y="252.20000000000002" width="103" height="42.59999999999998" fill="#ececec" stroke="#1eaef0" stroke-width="2.8" />
<rect x="678.8" y="255.39999999999998" width="8" height="8" fill="#ffffff" stroke="#333" stroke-width="0.8" />
<path d="M680.3 259.4 L682.0999999999999 261.59999999999997 L685.5999999999999 256.59999999999997" fill="none" stroke="#222" stroke-width="0.9"/>
<text transform="translate(690.00,262.20) scale(0.915,1)" font-size="7.81" fill="#000" font-weight="normal" text-anchor="start" >Channel 2 (2±)</text>
<rect x="765" y="254.1" width="13.5" height="9.5" fill="#dcdcdc" stroke="#c4c4c4" stroke-width="0.5" />
<path d="M774.31 258.39 L775.23 258.44 L775.23 259.26 L774.31 259.31 L773.88 260.34 L774.50 261.02 L773.92 261.60 L773.24 260.98 L772.21 261.41 L772.16 262.33 L771.34 262.33 L771.29 261.41 L770.26 260.98 L769.58 261.60 L769.00 261.02 L769.62 260.34 L769.19 259.31 L768.27 259.26 L768.27 258.44 L769.19 258.39 L769.62 257.36 L769.00 256.68 L769.58 256.10 L770.26 256.72 L771.29 256.29 L771.34 255.37 L772.16 255.37 L772.21 256.29 L773.24 256.72 L773.92 256.10 L774.50 256.68 L773.88 257.36 Z M773.05 258.85 A1.3 1.3 0 1 0 770.45 258.85 A1.3 1.3 0 1 0 773.05 258.85 Z" fill="#e8e8e8" stroke="#7a7a7a" stroke-width="0.6" fill-rule="evenodd"/>
<text transform="translate(681.00,275.70) scale(0.915,1)" font-size="7.81" fill="#000" font-weight="normal" text-anchor="start" >Offset:</text>
<rect x="719" y="266.7" width="59.5" height="12.2" fill="#ffffff" stroke="#a8a8a8" stroke-width="0.7" />
<text transform="translate(722.00,275.90) scale(0.915,1)" font-size="7.81" fill="#000" font-weight="normal" text-anchor="start" >0 V</text>
<path d="M769.7 272.2 L772.5 274.8 L775.3 272.2" fill="none" stroke="#444" stroke-width="0.8"/>
<text transform="translate(681.00,288.70) scale(0.915,1)" font-size="7.81" fill="#000" font-weight="normal" text-anchor="start" >Range:</text>
<rect x="719" y="280.7" width="59.5" height="12.2" fill="#ffffff" stroke="#a8a8a8" stroke-width="0.7" />
<text transform="translate(722.00,289.90) scale(0.915,1)" font-size="7.81" fill="#000" font-weight="normal" text-anchor="start" >500 mV/div</text>
<path d="M769.7 286.2 L772.5 288.8 L775.3 286.2" fill="none" stroke="#444" stroke-width="0.8"/>
<rect x="0" y="469" width="800" height="18" fill="#f0f0f0" />
<rect x="549" y="474" width="54.4" height="11.5" fill="#e6e6e6" stroke="#c8c8c8" stroke-width="0.6" />
<text transform="translate(576.20,483.00) scale(0.915,1)" font-size="7.81" fill="#000" font-weight="normal" text-anchor="middle" >Manual Trigger</text>
<rect x="609" y="474" width="100" height="11.5" fill="#e6e6e6" stroke="#c8c8c8" stroke-width="0.6" />
<text transform="translate(659.00,483.00) scale(0.915,1)" font-size="7.81" fill="#000" font-weight="normal" text-anchor="middle" >Discovery SN:210244516192</text>
<rect x="714.5" y="474" width="14" height="11.5" fill="#e6e6e6" stroke="#c8c8c8" stroke-width="0.6" />
<path d="M718 482 L720 477.5 H725.5 L723.5 482 Z" fill="#f4f4f4" stroke="#777" stroke-width="0.6"/>
<rect x="734" y="474" width="51.4" height="11.5" fill="#e6e6e6" stroke="#c8c8c8" stroke-width="0.6" />
<text transform="translate(741.50,483.00) scale(0.915,1)" font-size="7.81" fill="#000" font-weight="normal" text-anchor="start" >Status: OK</text>
<path d="M779.5 482 L782.5 482 L781 483.6 Z" fill="#111"/>
<rect x="797" y="484" width="1" height="1" fill="#9a9a9a" />
<rect x="794" y="484" width="1" height="1" fill="#9a9a9a" />
<rect x="797" y="481" width="1" height="1" fill="#9a9a9a" />
</svg>
</body></html>
